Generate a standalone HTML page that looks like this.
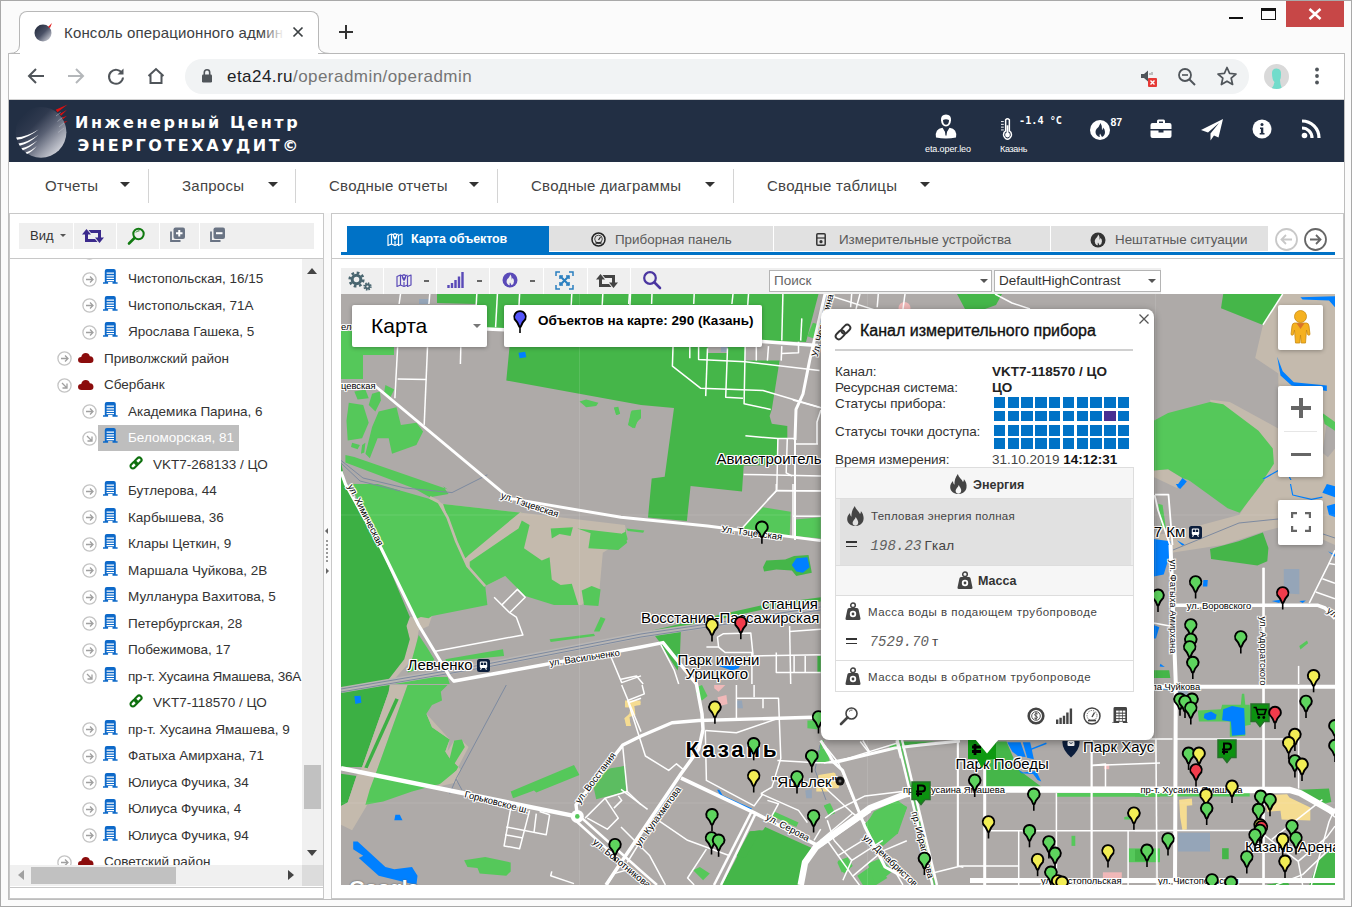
<!DOCTYPE html>
<html><head><meta charset="utf-8"><title>Консоль операционного администратора</title>
<style>
*{box-sizing:border-box;margin:0;padding:0}
html,body{width:1352px;height:907px;overflow:hidden;background:#fbfbfb;font-family:"Liberation Sans",sans-serif;}
div,span,svg{position:absolute}
span.i{position:static}
.t{white-space:nowrap;line-height:1}
#win{left:0;top:0;width:1352px;height:907px;border:1px solid #a9a9a9;background:#fbfbfb}
#tab{left:19px;top:11px;width:300px;height:43px;background:#fff;border:1px solid #b8b8b8;border-bottom:none;border-radius:8px 8px 0 0}
#toolbar{left:9px;top:53px;width:1335px;height:47px;background:#fff;border-top:1px solid #b8b8b8}
#omni{left:185px;top:59px;width:1064px;height:34.6px;border-radius:17.3px;background:#f1f3f4}
#hdr{left:9px;top:100px;width:1335px;height:62px;background:#222f44}
.brand{left:75px;color:#fff;font-weight:bold;font-size:16px;letter-spacing:2.55px;font-family:"DejaVu Sans","Liberation Sans",sans-serif}
#menu{left:9px;top:162px;width:1335px;height:51px;background:#fff}
.mi{top:178px;font-size:15px;color:#444;letter-spacing:0.25px}
.msep{top:169px;width:1px;height:34px;background:#d4d4d4}
.marr{top:182px;width:0;height:0;border-left:5px solid transparent;border-right:5px solid transparent;border-top:5px solid #333}
#lp{left:9px;top:213px;width:315px;height:686px;border:1px solid #c8c8c8;background:#fff}
#rp{left:331px;top:213px;width:1013px;height:686px;border:1px solid #c8c8c8;background:#fff}
.tr{font-size:13.5px;color:#333}
.hl{font-size:9px;color:#fff}
.tabg{top:226px;height:24.7px;background:#e1e1e1}
.tabt{top:232.5px;font-size:13.4px;color:#5a5a5a}
.pl{left:835px;font-size:13.5px;color:#333;letter-spacing:-0.1px}
.pv{left:992px;font-size:13.5px;color:#222;font-weight:bold}
.sq{width:11.5px;height:10.7px;background:#0072c6}
.mc{background:#fff;border-radius:2px;box-shadow:0 1px 4px rgba(0,0,0,.3)}
.ml{font-size:12px;color:#000;text-shadow:-1px 0 #fff,1px 0 #fff,0 -1px #fff,0 1px #fff}
</style></head><body>
<div id="win"></div>
<div id="tab"></div>
<svg style="left:9px;top:45px" width="12" height="9" viewBox="0 0 12 9"><path d="M0 8.5 Q10.5 8.5 10.5 0 L12 0 L12 9 L0 9Z" fill="#fff"/><path d="M0 8.5 Q10.5 8.5 10.5 0" fill="none" stroke="#b8b8b8"/></svg>
<svg style="left:318px;top:45px" width="12" height="9" viewBox="0 0 12 9"><path d="M12 8.5 Q0.5 8.5 0.5 0 L0 0 L0 9 L12 9Z" fill="#fff"/><path d="M12 8.5 Q0.5 8.5 0.5 0" fill="none" stroke="#b8b8b8"/></svg>
<div id="toolbar"></div>
<div style="left:8px;top:53px;width:1px;height:847px;background:#bdbdbd"></div><div style="left:1344px;top:53px;width:1px;height:847px;background:#bdbdbd"></div><div style="left:8px;top:899px;width:1337px;height:1px;background:#bdbdbd"></div>
<div style="left:20px;top:53px;width:298px;height:2px;background:#fff"></div>
<svg style="left:33px;top:22px" width="20" height="20" viewBox="0 0 20 20"><defs><linearGradient id="fg" x1="0" y1="0" x2="1" y2="1"><stop offset="0" stop-color="#1d2536"/><stop offset="0.5" stop-color="#4a5166"/><stop offset="1" stop-color="#e8e9ee"/></linearGradient></defs><circle cx="10" cy="11" r="8.5" fill="url(#fg)"/><path d="M15 5 L19 1 L17 6Z" fill="#e21b1b"/></svg>
<div class="t" style="left:64px;top:24.500px;font-size:15px;color:#3c4043;width:219px;overflow:hidden;letter-spacing:0.150px">Консоль операционного админ</div>
<div style="left:262px;top:20px;width:22px;height:24px;background:linear-gradient(90deg,rgba(255,255,255,0),#fff)"></div>
<svg style="left:291px;top:25px" width="14" height="14" viewBox="0 0 14 14"><path d="M2.5 2.5 L11.5 11.5 M11.5 2.5 L2.5 11.5" stroke="#3c4043" stroke-width="1.7"/></svg>
<svg style="left:338px;top:24px" width="16" height="16" viewBox="0 0 16 16"><path d="M8 1 V15 M1 8 H15" stroke="#333" stroke-width="2"/></svg>
<div style="left:1229px;top:17px;width:14px;height:2px;background:#111"></div>
<div style="left:1261px;top:8px;width:15px;height:12px;border:1px solid #111;border-top:3px solid #111"></div>
<div style="left:1286px;top:1px;width:58px;height:26px;background:#c74747"></div>
<svg style="left:1308px;top:8px" width="14" height="12" viewBox="0 0 14 12"><path d="M1.5 1 L12.5 11 M12.5 1 L1.5 11" stroke="#fff" stroke-width="2.6"/></svg>
<svg style="left:26px;top:66px" width="20" height="20" viewBox="0 0 20 20"><path d="M18 10 H3.5 M10 3 L3 10 L10 17" fill="none" stroke="#50555a" stroke-width="2"/></svg>
<svg style="left:66px;top:66px" width="20" height="20" viewBox="0 0 20 20"><path d="M2 10 H16.5 M10 3 L17 10 L10 17" fill="none" stroke="#b4b7ba" stroke-width="2"/></svg>
<svg style="left:106px;top:66px" width="20" height="20" viewBox="0 0 20 20"><path d="M16.2 7.5 A7 7 0 1 0 17 11.5" fill="none" stroke="#50555a" stroke-width="2"/><path d="M17.5 2.5 V8.5 H11.5Z" fill="#50555a"/></svg>
<svg style="left:146px;top:66px" width="20" height="20" viewBox="0 0 20 20"><path d="M2.5 10 L10 3 L17.5 10 M4.5 9 V17 H15.5 V9" fill="none" stroke="#50555a" stroke-width="2"/></svg>
<div id="omni"></div>
<div style="left:9px;top:99px;width:1335px;height:1px;background:#d2d2d2"></div>
<svg style="left:201px;top:68px" width="12" height="16" viewBox="0 0 12 16"><rect x="1" y="6.5" width="10" height="8" rx="1.2" fill="#50555a"/><path d="M3.3 7 V4.5 A2.7 2.7 0 0 1 8.7 4.5 V7" fill="none" stroke="#50555a" stroke-width="1.6"/></svg>
<div class="t" style="left:227px;top:68px;font-size:17px;color:#202124;letter-spacing:0.45px">eta24.ru<span class="i" style="color:#757575">/operadmin/operadmin</span></div>
<svg style="left:1139px;top:68px" width="22" height="20" viewBox="0 0 22 20"><path d="M2 6 H5 L9 2.5 V13.5 L5 10 H2Z" fill="#50555a"/><path d="M11 5 V7 M13 4 V7" stroke="#888" stroke-width="1"/><rect x="9" y="10" width="9" height="9" rx="1" fill="#e53935"/><path d="M11.5 12.5 L15.5 16.5 M15.5 12.5 L11.5 16.5" stroke="#fff" stroke-width="1.4"/></svg>
<svg style="left:1176px;top:66px" width="22" height="22" viewBox="0 0 22 22"><circle cx="9" cy="9" r="6" fill="none" stroke="#50555a" stroke-width="1.8"/><path d="M13.5 13.5 L19 19" stroke="#50555a" stroke-width="2"/><path d="M6 9 H12" stroke="#50555a" stroke-width="1.6"/></svg>
<svg style="left:1216px;top:65px" width="22" height="22" viewBox="0 0 22 22"><path d="M11 2.5 L13.6 8.4 L20 9 L15.2 13.2 L16.6 19.5 L11 16.2 L5.4 19.5 L6.8 13.2 L2 9 L8.4 8.4Z" fill="none" stroke="#50555a" stroke-width="1.7" stroke-linejoin="round"/></svg>
<svg style="left:1264px;top:64px" width="25" height="25" viewBox="0 0 25 25"><defs><clipPath id="av"><circle cx="12.5" cy="12.5" r="12.5"/></clipPath></defs><circle cx="12.5" cy="12.5" r="12.5" fill="#d9d9d9"/><g clip-path="url(#av)"><path d="M8 9 Q8 4.5 12.5 4.5 Q17.5 4.5 17 10.5 Q17 14 16 16 Q16 20 18 25 L7 25 Q10 22 10.5 18 Q8 16 8 9Z" fill="#72dccb"/></g></svg>
<svg style="left:1314px;top:66px" width="6" height="20" viewBox="0 0 6 20"><circle cx="3" cy="3.5" r="1.9" fill="#50555a"/><circle cx="3" cy="10" r="1.9" fill="#50555a"/><circle cx="3" cy="16.5" r="1.9" fill="#50555a"/></svg>
<div id="hdr"></div>
<svg style="left:13px;top:99px" width="62" height="62" viewBox="0 0 62 62"><defs><linearGradient id="lg" x1="0.150" y1="0.150" x2="0.850" y2="0.850"><stop offset="0" stop-color="#222f44"/><stop offset="0.300" stop-color="#2f394e"/><stop offset="0.550" stop-color="#5a6174"/><stop offset="0.800" stop-color="#9a9eab"/><stop offset="1" stop-color="#c9cbd3"/></linearGradient></defs><circle cx="28" cy="33.300" r="25.400" fill="url(#lg)"/><g fill="#fff"><path d="M3.100 38.600 Q14 37.500 25.600 30.400 Q15 39 4.200 40.800Z"/><path d="M5.500 44.600 Q15 43 25.600 35.700 Q16 44.500 6.800 46.700Z"/><path d="M8.400 49.300 Q16 47.800 24.400 41.600 Q17 49 9.800 51.200Z"/><path d="M12.600 53.400 Q18 52 23.800 46.900 Q19 52.800 14 55Z"/></g><g stroke="#b9bcc6" stroke-width="0.800" opacity="0.700"><path d="M43 17 L47.500 13.500 M44.500 22.500 L49.500 18.500 M46 28 L51 24 M45 33.500 L51 29"/></g><path d="M42.700 10.800 L54.600 5.500 L44.500 13.200Z M46.900 15 L54 10.800 L48 16.800Z M49.300 18.500 L54 16.800 L49.800 20.300Z M51 22.700 L54.600 22 L51.600 24Z" fill="#e00f0f"/></svg>
<div class="t brand" style="top:115px">Инженерный Центр</div>
<div class="t brand" style="top:138px;left:77.500px">ЭНЕРГОТЕХАУДИТ©</div>
<svg style="left:934px;top:112px" width="24" height="28" viewBox="0 0 24 28"><path d="M12 2.500 Q17.500 2.500 17 8.500 Q16.500 14 12 14.500 Q7.500 14 7 8.500 Q6.500 2.500 12 2.500Z" fill="#fff"/><path d="M9 8 Q12 6.500 15 8 Q15 12.500 12 12.800 Q9 12.500 9 8Z" fill="#222f44"/><path d="M2 25.500 Q0.500 17 8.500 15.800 L12 21.500 L15.500 15.800 Q23.500 17 22 25.500 Q12 27.500 2 25.500Z" fill="#fff"/><path d="M12 16 L13.200 17.800 L12.600 23 L12 24 L11.400 23 L10.800 17.800Z" fill="#222f44"/></svg>
<div class="t hl" style="left:925px;top:145px;letter-spacing:-0.1px">eta.oper.leo</div>
<svg style="left:1001px;top:117px" width="13" height="24" viewBox="0 0 14 24"><path d="M5 2 Q7 0 9 2 V14 Q12 16 11 19.5 Q9.5 23 7 23 Q4.5 23 3 19.5 Q2 16 5 14Z" fill="none" stroke="#fff" stroke-width="1.6"/><circle cx="7" cy="18.5" r="2.6" fill="#fff"/><path d="M7 8 V18" stroke="#fff" stroke-width="2"/><path d="M0 4 H3 M0 7 H3 M0 10 H3 M0 13 H3" stroke="#fff" stroke-width="1"/></svg>
<div class="t" style="left:1019px;top:116px;font-size:10.200px;font-weight:bold;color:#fff;font-family:'DejaVu Sans Mono','Liberation Mono',monospace">-1.4 °C</div>
<div class="t hl" style="left:1000px;top:145px;letter-spacing:-0.3px">Казань</div>
<svg style="left:1089px;top:119px" width="22" height="22" viewBox="0 0 22 22"><circle cx="11" cy="11" r="10" fill="#fff"/><path d="M11.5 4 Q10 8 7.5 10 Q5.5 13 7.5 16 Q9 18 11 18 Q10 16.5 11 14.5 Q12 16 13 18 Q16 16.5 16 13 Q16 10 14 8.5 Q14 10.5 13 11 Q13.5 7 11.5 4Z" fill="#222f44"/></svg>
<div class="t" style="left:1110.500px;top:116.500px;font-size:10.500px;font-weight:bold;color:#fff">87</div>
<svg style="left:1150px;top:119px" width="22" height="20" viewBox="0 0 22 20"><path d="M7 4 V2 Q7 0.5 8.5 0.5 H13.5 Q15 0.5 15 2 V4 H19.5 Q21.5 4 21.5 6 V10 H0.5 V6 Q0.5 4 2.5 4Z M9 4 H13 V2.5 H9Z" fill="#fff" fill-rule="evenodd"/><path d="M0.5 11.5 H8.5 V13.5 H13.5 V11.5 H21.5 V17 Q21.5 19 19.5 19 H2.5 Q0.5 19 0.5 17Z" fill="#fff"/></svg>
<svg style="left:1200px;top:118px" width="24" height="24" viewBox="0 0 24 24"><path d="M23 1 L1 12 L8 14.5 L19 5 L10.5 15.5 L10.5 22.5 L14 17.5 L18.5 19.5Z" fill="#fff"/></svg>
<svg style="left:1252px;top:119px" width="20" height="20" viewBox="0 0 20 20"><circle cx="10" cy="10" r="9.5" fill="#fff"/><circle cx="10" cy="5.6" r="1.5" fill="#222f44"/><path d="M8 8.5 H11.3 V14 H12.5 V15.5 H7.7 V14 H8.9 V10 H8Z" fill="#222f44"/></svg>
<svg style="left:1301px;top:119px" width="22" height="20" viewBox="0 0 22 20"><circle cx="3.5" cy="16.5" r="2.8" fill="#fff"/><path d="M1 9 A10 10 0 0 1 11 19" fill="none" stroke="#fff" stroke-width="3.2"/><path d="M1 2 A17 17 0 0 1 18 19" fill="none" stroke="#fff" stroke-width="3.2"/></svg>
<div id="menu"></div>
<div class="t mi" style="left:45px">Отчеты</div>
<div class="marr" style="left:120px"></div>
<div class="t mi" style="left:182px">Запросы</div>
<div class="marr" style="left:268px"></div>
<div class="t mi" style="left:329px">Сводные отчеты</div>
<div class="marr" style="left:469px"></div>
<div class="t mi" style="left:531px">Сводные диаграммы</div>
<div class="marr" style="left:705px"></div>
<div class="t mi" style="left:767px">Сводные таблицы</div>
<div class="marr" style="left:920px"></div>
<div class="msep" style="left:148px"></div>
<div class="msep" style="left:295px"></div>
<div class="msep" style="left:497px"></div>
<div class="msep" style="left:733px"></div>
<div id="lp"></div>
<div id="rp"></div>
<div style="left:19px;top:223px;width:295px;height:26px;background:#efefef"></div>
<div style="left:73px;top:223px;width:1px;height:26px;background:#fff"></div>
<div style="left:116px;top:223px;width:1px;height:26px;background:#fff"></div>
<div style="left:159px;top:223px;width:1px;height:26px;background:#fff"></div>
<div style="left:199px;top:223px;width:1px;height:26px;background:#fff"></div>
<div class="t" style="left:30px;top:229px;font-size:13px;color:#333">Вид</div>
<div style="left:60px;top:234px;width:0;height:0;border-left:3px solid transparent;border-right:3px solid transparent;border-top:3px solid #555"></div>
<svg style="left:82px;top:228px" width="22" height="16" viewBox="0 0 22 16"><path d="M0 6.5 L4.5 1 L9 6.5 H6 V11 H13 L15.5 14 H3 V6.5Z M22 9.5 L17.5 15 L13 9.5 H16 V5 H9 L6.5 2 H19 V9.5Z" fill="#3b2a8c"/></svg>
<svg style="left:127px;top:226px" width="20" height="20" viewBox="0 0 20 20"><circle cx="11.5" cy="8" r="5.2" fill="none" stroke="#117a11" stroke-width="2"/><path d="M7.5 12 L2 17.5" stroke="#117a11" stroke-width="2.6" stroke-linecap="round"/><path d="M9 6.5 Q10 4.5 12.5 4.8" stroke="#117a11" stroke-width="1" fill="none"/></svg>
<svg style="left:170px;top:227px" width="16" height="16" viewBox="0 0 16 16"><path d="M1 4.5 V14 H10.5" fill="none" stroke="#6a7484" stroke-width="1.8"/><rect x="3.5" y="0.5" width="11.5" height="11.5" rx="2" fill="#6a7484"/><path d="M6 6.2 H12.5 M9.25 3 V9.5" stroke="#fff" stroke-width="2"/></svg>
<svg style="left:210px;top:227px" width="16" height="16" viewBox="0 0 16 16"><path d="M1 4.5 V14 H10.5" fill="none" stroke="#6a7484" stroke-width="1.8"/><rect x="3.5" y="0.5" width="11.5" height="11.5" rx="2" fill="#6a7484"/><path d="M6 6.2 H12.5" stroke="#fff" stroke-width="2"/></svg>
<div style="left:10px;top:258px;width:313px;height:1px;background:#c8c8c8"></div>
<div style="left:10px;top:259px;width:292px;height:606px;overflow:hidden">
<svg style="left:71.5px;top:-14.0px" width="15" height="15" viewBox="0 0 15 15"><circle cx="7.5" cy="7.5" r="6.6" fill="#fff" stroke="#c4c4c4" stroke-width="1.3"/><path d="M4 7.5 H11 M8 4.5 L11 7.5 L8 10.5" fill="none" stroke="#a0a0a0" stroke-width="1.3"/></svg>
<svg style="left:71.5px;top:12.5px" width="15" height="15" viewBox="0 0 15 15"><circle cx="7.5" cy="7.5" r="6.6" fill="#fff" stroke="#c4c4c4" stroke-width="1.3"/><path d="M4 7.5 H11 M8 4.5 L11 7.5 L8 10.5" fill="none" stroke="#a0a0a0" stroke-width="1.3"/></svg>
<svg style="left:93.2px;top:10.4px" width="14.600" height="14.800" viewBox="0 0 14.600 14.800"><path d="M1.800 2 Q1.800 0 3.800 0 H10.800 Q12.800 0 12.800 2 V13.300 H14.600 V14.800 H9.500 V13 H5.100 V14.800 H0 V13.300 H1.800Z" fill="#0d69c9"/><path d="M3.600 4.200 H11 M3.600 6.800 H11 M3.600 9.400 H11 M3.600 11.700 H11" stroke="#fff" stroke-width="1.200"/></svg>
<div class="t tr" style="left:118px;top:13.0px;color:#333">Чистопольская, 16/15</div>
<svg style="left:71.5px;top:39.0px" width="15" height="15" viewBox="0 0 15 15"><circle cx="7.5" cy="7.5" r="6.6" fill="#fff" stroke="#c4c4c4" stroke-width="1.3"/><path d="M4 7.5 H11 M8 4.5 L11 7.5 L8 10.5" fill="none" stroke="#a0a0a0" stroke-width="1.3"/></svg>
<svg style="left:93.2px;top:36.9px" width="14.600" height="14.800" viewBox="0 0 14.600 14.800"><path d="M1.800 2 Q1.800 0 3.800 0 H10.800 Q12.800 0 12.800 2 V13.300 H14.600 V14.800 H9.500 V13 H5.100 V14.800 H0 V13.300 H1.800Z" fill="#0d69c9"/><path d="M3.600 4.200 H11 M3.600 6.800 H11 M3.600 9.400 H11 M3.600 11.700 H11" stroke="#fff" stroke-width="1.200"/></svg>
<div class="t tr" style="left:118px;top:39.5px;color:#333">Чистопольская, 71А</div>
<svg style="left:71.5px;top:65.5px" width="15" height="15" viewBox="0 0 15 15"><circle cx="7.5" cy="7.5" r="6.6" fill="#fff" stroke="#c4c4c4" stroke-width="1.3"/><path d="M4 7.5 H11 M8 4.5 L11 7.5 L8 10.5" fill="none" stroke="#a0a0a0" stroke-width="1.3"/></svg>
<svg style="left:93.2px;top:63.4px" width="14.600" height="14.800" viewBox="0 0 14.600 14.800"><path d="M1.800 2 Q1.800 0 3.800 0 H10.800 Q12.800 0 12.800 2 V13.300 H14.600 V14.800 H9.500 V13 H5.100 V14.800 H0 V13.300 H1.800Z" fill="#0d69c9"/><path d="M3.600 4.200 H11 M3.600 6.800 H11 M3.600 9.400 H11 M3.600 11.700 H11" stroke="#fff" stroke-width="1.200"/></svg>
<div class="t tr" style="left:118px;top:66.0px;color:#333">Ярослава Гашека, 5</div>
<svg style="left:46.5px;top:92.0px" width="15" height="15" viewBox="0 0 15 15"><circle cx="7.5" cy="7.5" r="6.6" fill="#fff" stroke="#c4c4c4" stroke-width="1.3"/><path d="M4 7.5 H11 M8 4.5 L11 7.5 L8 10.5" fill="none" stroke="#a0a0a0" stroke-width="1.3"/></svg>
<svg style="left:68.0px;top:94.0px" width="15.500" height="10" viewBox="0 0 17 11"><path d="M4 11 Q0 11 0 7.500 Q0 4.500 3.500 4.300 Q4.500 0 8.500 0 Q12 0 13 3.500 Q17 3.800 17 7.500 Q17 11 13.500 11Z" fill="#8b0c0c"/></svg>
<div class="t tr" style="left:94px;top:92.5px;color:#333">Приволжский район</div>
<svg style="left:46.5px;top:118.5px" width="15" height="15" viewBox="0 0 15 15"><circle cx="7.5" cy="7.5" r="6.6" fill="#fff" stroke="#c4c4c4" stroke-width="1.3"/><path d="M5 5 L10 10 M10 5.5 V10 H5.5" fill="none" stroke="#a0a0a0" stroke-width="1.3"/></svg>
<svg style="left:68.0px;top:120.5px" width="15.500" height="10" viewBox="0 0 17 11"><path d="M4 11 Q0 11 0 7.500 Q0 4.500 3.500 4.300 Q4.500 0 8.500 0 Q12 0 13 3.500 Q17 3.800 17 7.500 Q17 11 13.500 11Z" fill="#8b0c0c"/></svg>
<div class="t tr" style="left:94px;top:119.0px;color:#333">Сбербанк</div>
<svg style="left:71.5px;top:145.0px" width="15" height="15" viewBox="0 0 15 15"><circle cx="7.5" cy="7.5" r="6.6" fill="#fff" stroke="#c4c4c4" stroke-width="1.3"/><path d="M4 7.5 H11 M8 4.5 L11 7.5 L8 10.5" fill="none" stroke="#a0a0a0" stroke-width="1.3"/></svg>
<svg style="left:93.2px;top:142.9px" width="14.600" height="14.800" viewBox="0 0 14.600 14.800"><path d="M1.800 2 Q1.800 0 3.800 0 H10.800 Q12.800 0 12.800 2 V13.300 H14.600 V14.800 H9.500 V13 H5.100 V14.800 H0 V13.300 H1.800Z" fill="#0d69c9"/><path d="M3.600 4.200 H11 M3.600 6.800 H11 M3.600 9.400 H11 M3.600 11.700 H11" stroke="#fff" stroke-width="1.200"/></svg>
<div class="t tr" style="left:118px;top:145.5px;color:#333">Академика Парина, 6</div>
<svg style="left:71.5px;top:171.5px" width="15" height="15" viewBox="0 0 15 15"><circle cx="7.5" cy="7.5" r="6.6" fill="#fff" stroke="#c4c4c4" stroke-width="1.3"/><path d="M5 5 L10 10 M10 5.5 V10 H5.5" fill="none" stroke="#a0a0a0" stroke-width="1.3"/></svg>
<div style="left:88px;top:166.0px;width:141px;height:26px;background:#bebebe"></div>
<svg style="left:93.2px;top:169.4px" width="14.600" height="14.800" viewBox="0 0 14.600 14.800"><path d="M1.800 2 Q1.800 0 3.800 0 H10.800 Q12.800 0 12.800 2 V13.300 H14.600 V14.800 H9.500 V13 H5.100 V14.800 H0 V13.300 H1.800Z" fill="#0d69c9"/><path d="M3.600 4.200 H11 M3.600 6.800 H11 M3.600 9.400 H11 M3.600 11.700 H11" stroke="#fff" stroke-width="1.200"/></svg>
<div class="t tr" style="left:118px;top:172.0px;color:#fff">Беломорская, 81</div>
<svg style="left:118.7px;top:196.5px" width="14" height="14" viewBox="0 0 14 14"><g transform="rotate(-45 7 7)" fill="none" stroke="#0e700e" stroke-width="2.100"><rect x="0.200" y="4.600" width="7.600" height="4.800" rx="2.400"/><rect x="6.200" y="4.600" width="7.600" height="4.800" rx="2.400"/></g></svg>
<div class="t tr" style="left:143px;top:198.5px;color:#333">VKT7-268133 / ЦО</div>
<svg style="left:71.5px;top:224.5px" width="15" height="15" viewBox="0 0 15 15"><circle cx="7.5" cy="7.5" r="6.6" fill="#fff" stroke="#c4c4c4" stroke-width="1.3"/><path d="M4 7.5 H11 M8 4.5 L11 7.5 L8 10.5" fill="none" stroke="#a0a0a0" stroke-width="1.3"/></svg>
<svg style="left:93.2px;top:222.4px" width="14.600" height="14.800" viewBox="0 0 14.600 14.800"><path d="M1.800 2 Q1.800 0 3.800 0 H10.800 Q12.800 0 12.800 2 V13.300 H14.600 V14.800 H9.500 V13 H5.100 V14.800 H0 V13.300 H1.800Z" fill="#0d69c9"/><path d="M3.600 4.200 H11 M3.600 6.800 H11 M3.600 9.400 H11 M3.600 11.700 H11" stroke="#fff" stroke-width="1.200"/></svg>
<div class="t tr" style="left:118px;top:225.0px;color:#333">Бутлерова, 44</div>
<svg style="left:71.5px;top:251.0px" width="15" height="15" viewBox="0 0 15 15"><circle cx="7.5" cy="7.5" r="6.6" fill="#fff" stroke="#c4c4c4" stroke-width="1.3"/><path d="M4 7.5 H11 M8 4.5 L11 7.5 L8 10.5" fill="none" stroke="#a0a0a0" stroke-width="1.3"/></svg>
<svg style="left:93.2px;top:248.9px" width="14.600" height="14.800" viewBox="0 0 14.600 14.800"><path d="M1.800 2 Q1.800 0 3.800 0 H10.800 Q12.800 0 12.800 2 V13.300 H14.600 V14.800 H9.500 V13 H5.100 V14.800 H0 V13.300 H1.800Z" fill="#0d69c9"/><path d="M3.600 4.200 H11 M3.600 6.800 H11 M3.600 9.400 H11 M3.600 11.700 H11" stroke="#fff" stroke-width="1.200"/></svg>
<div class="t tr" style="left:118px;top:251.5px;color:#333">Карбышева, 36</div>
<svg style="left:71.5px;top:277.5px" width="15" height="15" viewBox="0 0 15 15"><circle cx="7.5" cy="7.5" r="6.6" fill="#fff" stroke="#c4c4c4" stroke-width="1.3"/><path d="M4 7.5 H11 M8 4.5 L11 7.5 L8 10.5" fill="none" stroke="#a0a0a0" stroke-width="1.3"/></svg>
<svg style="left:93.2px;top:275.4px" width="14.600" height="14.800" viewBox="0 0 14.600 14.800"><path d="M1.800 2 Q1.800 0 3.800 0 H10.800 Q12.800 0 12.800 2 V13.300 H14.600 V14.800 H9.500 V13 H5.100 V14.800 H0 V13.300 H1.800Z" fill="#0d69c9"/><path d="M3.600 4.200 H11 M3.600 6.800 H11 M3.600 9.400 H11 M3.600 11.700 H11" stroke="#fff" stroke-width="1.200"/></svg>
<div class="t tr" style="left:118px;top:278.0px;color:#333">Клары Цеткин, 9</div>
<svg style="left:71.5px;top:304.0px" width="15" height="15" viewBox="0 0 15 15"><circle cx="7.5" cy="7.5" r="6.6" fill="#fff" stroke="#c4c4c4" stroke-width="1.3"/><path d="M4 7.5 H11 M8 4.5 L11 7.5 L8 10.5" fill="none" stroke="#a0a0a0" stroke-width="1.3"/></svg>
<svg style="left:93.2px;top:301.9px" width="14.600" height="14.800" viewBox="0 0 14.600 14.800"><path d="M1.800 2 Q1.800 0 3.800 0 H10.800 Q12.800 0 12.800 2 V13.300 H14.600 V14.800 H9.500 V13 H5.100 V14.800 H0 V13.300 H1.800Z" fill="#0d69c9"/><path d="M3.600 4.200 H11 M3.600 6.800 H11 M3.600 9.400 H11 M3.600 11.700 H11" stroke="#fff" stroke-width="1.200"/></svg>
<div class="t tr" style="left:118px;top:304.5px;color:#333">Маршала Чуйкова, 2В</div>
<svg style="left:71.5px;top:330.5px" width="15" height="15" viewBox="0 0 15 15"><circle cx="7.5" cy="7.5" r="6.6" fill="#fff" stroke="#c4c4c4" stroke-width="1.3"/><path d="M4 7.5 H11 M8 4.5 L11 7.5 L8 10.5" fill="none" stroke="#a0a0a0" stroke-width="1.3"/></svg>
<svg style="left:93.2px;top:328.4px" width="14.600" height="14.800" viewBox="0 0 14.600 14.800"><path d="M1.800 2 Q1.800 0 3.800 0 H10.800 Q12.800 0 12.800 2 V13.300 H14.600 V14.800 H9.500 V13 H5.100 V14.800 H0 V13.300 H1.800Z" fill="#0d69c9"/><path d="M3.600 4.200 H11 M3.600 6.800 H11 M3.600 9.400 H11 M3.600 11.700 H11" stroke="#fff" stroke-width="1.200"/></svg>
<div class="t tr" style="left:118px;top:331.0px;color:#333">Мулланура Вахитова, 5</div>
<svg style="left:71.5px;top:357.0px" width="15" height="15" viewBox="0 0 15 15"><circle cx="7.5" cy="7.5" r="6.6" fill="#fff" stroke="#c4c4c4" stroke-width="1.3"/><path d="M4 7.5 H11 M8 4.5 L11 7.5 L8 10.5" fill="none" stroke="#a0a0a0" stroke-width="1.3"/></svg>
<svg style="left:93.2px;top:354.9px" width="14.600" height="14.800" viewBox="0 0 14.600 14.800"><path d="M1.800 2 Q1.800 0 3.800 0 H10.800 Q12.800 0 12.800 2 V13.300 H14.600 V14.800 H9.500 V13 H5.100 V14.800 H0 V13.300 H1.800Z" fill="#0d69c9"/><path d="M3.600 4.200 H11 M3.600 6.800 H11 M3.600 9.400 H11 M3.600 11.700 H11" stroke="#fff" stroke-width="1.200"/></svg>
<div class="t tr" style="left:118px;top:357.5px;color:#333">Петербургская, 28</div>
<svg style="left:71.5px;top:383.5px" width="15" height="15" viewBox="0 0 15 15"><circle cx="7.5" cy="7.5" r="6.6" fill="#fff" stroke="#c4c4c4" stroke-width="1.3"/><path d="M4 7.5 H11 M8 4.5 L11 7.5 L8 10.5" fill="none" stroke="#a0a0a0" stroke-width="1.3"/></svg>
<svg style="left:93.2px;top:381.4px" width="14.600" height="14.800" viewBox="0 0 14.600 14.800"><path d="M1.800 2 Q1.800 0 3.800 0 H10.800 Q12.800 0 12.800 2 V13.300 H14.600 V14.800 H9.500 V13 H5.100 V14.800 H0 V13.300 H1.800Z" fill="#0d69c9"/><path d="M3.600 4.200 H11 M3.600 6.800 H11 M3.600 9.400 H11 M3.600 11.700 H11" stroke="#fff" stroke-width="1.200"/></svg>
<div class="t tr" style="left:118px;top:384.0px;color:#333">Побежимова, 17</div>
<svg style="left:71.5px;top:410.0px" width="15" height="15" viewBox="0 0 15 15"><circle cx="7.5" cy="7.5" r="6.6" fill="#fff" stroke="#c4c4c4" stroke-width="1.3"/><path d="M5 5 L10 10 M10 5.5 V10 H5.5" fill="none" stroke="#a0a0a0" stroke-width="1.3"/></svg>
<svg style="left:93.2px;top:407.9px" width="14.600" height="14.800" viewBox="0 0 14.600 14.800"><path d="M1.800 2 Q1.800 0 3.800 0 H10.800 Q12.800 0 12.800 2 V13.300 H14.600 V14.800 H9.500 V13 H5.100 V14.800 H0 V13.300 H1.800Z" fill="#0d69c9"/><path d="M3.600 4.200 H11 M3.600 6.800 H11 M3.600 9.400 H11 M3.600 11.700 H11" stroke="#fff" stroke-width="1.200"/></svg>
<div class="t tr" style="left:118px;top:410.5px;color:#333;letter-spacing:-0.2px">пр-т. Хусаина Ямашева, 36А</div>
<svg style="left:118.7px;top:435.0px" width="14" height="14" viewBox="0 0 14 14"><g transform="rotate(-45 7 7)" fill="none" stroke="#0e700e" stroke-width="2.100"><rect x="0.200" y="4.600" width="7.600" height="4.800" rx="2.400"/><rect x="6.200" y="4.600" width="7.600" height="4.800" rx="2.400"/></g></svg>
<div class="t tr" style="left:143px;top:437.0px;color:#333">VKT7-118570 / ЦО</div>
<svg style="left:71.5px;top:463.0px" width="15" height="15" viewBox="0 0 15 15"><circle cx="7.5" cy="7.5" r="6.6" fill="#fff" stroke="#c4c4c4" stroke-width="1.3"/><path d="M4 7.5 H11 M8 4.5 L11 7.5 L8 10.5" fill="none" stroke="#a0a0a0" stroke-width="1.3"/></svg>
<svg style="left:93.2px;top:460.9px" width="14.600" height="14.800" viewBox="0 0 14.600 14.800"><path d="M1.800 2 Q1.800 0 3.800 0 H10.800 Q12.800 0 12.800 2 V13.300 H14.600 V14.800 H9.500 V13 H5.100 V14.800 H0 V13.300 H1.800Z" fill="#0d69c9"/><path d="M3.600 4.200 H11 M3.600 6.800 H11 M3.600 9.400 H11 M3.600 11.700 H11" stroke="#fff" stroke-width="1.200"/></svg>
<div class="t tr" style="left:118px;top:463.5px;color:#333">пр-т. Хусаина Ямашева, 9</div>
<svg style="left:71.5px;top:489.5px" width="15" height="15" viewBox="0 0 15 15"><circle cx="7.5" cy="7.5" r="6.6" fill="#fff" stroke="#c4c4c4" stroke-width="1.3"/><path d="M4 7.5 H11 M8 4.5 L11 7.5 L8 10.5" fill="none" stroke="#a0a0a0" stroke-width="1.3"/></svg>
<svg style="left:93.2px;top:487.4px" width="14.600" height="14.800" viewBox="0 0 14.600 14.800"><path d="M1.800 2 Q1.800 0 3.800 0 H10.800 Q12.800 0 12.800 2 V13.300 H14.600 V14.800 H9.500 V13 H5.100 V14.800 H0 V13.300 H1.800Z" fill="#0d69c9"/><path d="M3.600 4.200 H11 M3.600 6.800 H11 M3.600 9.400 H11 M3.600 11.700 H11" stroke="#fff" stroke-width="1.200"/></svg>
<div class="t tr" style="left:118px;top:490.0px;color:#333">Фатыха Амирхана, 71</div>
<svg style="left:71.5px;top:516.0px" width="15" height="15" viewBox="0 0 15 15"><circle cx="7.5" cy="7.5" r="6.6" fill="#fff" stroke="#c4c4c4" stroke-width="1.3"/><path d="M4 7.5 H11 M8 4.5 L11 7.5 L8 10.5" fill="none" stroke="#a0a0a0" stroke-width="1.3"/></svg>
<svg style="left:93.2px;top:513.9px" width="14.600" height="14.800" viewBox="0 0 14.600 14.800"><path d="M1.800 2 Q1.800 0 3.800 0 H10.800 Q12.800 0 12.800 2 V13.300 H14.600 V14.800 H9.500 V13 H5.100 V14.800 H0 V13.300 H1.800Z" fill="#0d69c9"/><path d="M3.600 4.200 H11 M3.600 6.800 H11 M3.600 9.400 H11 M3.600 11.700 H11" stroke="#fff" stroke-width="1.200"/></svg>
<div class="t tr" style="left:118px;top:516.5px;color:#333">Юлиуса Фучика, 34</div>
<svg style="left:71.5px;top:542.5px" width="15" height="15" viewBox="0 0 15 15"><circle cx="7.5" cy="7.5" r="6.6" fill="#fff" stroke="#c4c4c4" stroke-width="1.3"/><path d="M4 7.5 H11 M8 4.5 L11 7.5 L8 10.5" fill="none" stroke="#a0a0a0" stroke-width="1.3"/></svg>
<svg style="left:93.2px;top:540.4px" width="14.600" height="14.800" viewBox="0 0 14.600 14.800"><path d="M1.800 2 Q1.800 0 3.800 0 H10.800 Q12.800 0 12.800 2 V13.300 H14.600 V14.800 H9.500 V13 H5.100 V14.800 H0 V13.300 H1.800Z" fill="#0d69c9"/><path d="M3.600 4.200 H11 M3.600 6.800 H11 M3.600 9.400 H11 M3.600 11.700 H11" stroke="#fff" stroke-width="1.200"/></svg>
<div class="t tr" style="left:118px;top:543.0px;color:#333">Юлиуса Фучика, 4</div>
<svg style="left:71.5px;top:569.0px" width="15" height="15" viewBox="0 0 15 15"><circle cx="7.5" cy="7.5" r="6.6" fill="#fff" stroke="#c4c4c4" stroke-width="1.3"/><path d="M4 7.5 H11 M8 4.5 L11 7.5 L8 10.5" fill="none" stroke="#a0a0a0" stroke-width="1.3"/></svg>
<svg style="left:93.2px;top:566.9px" width="14.600" height="14.800" viewBox="0 0 14.600 14.800"><path d="M1.800 2 Q1.800 0 3.800 0 H10.800 Q12.800 0 12.800 2 V13.300 H14.600 V14.800 H9.500 V13 H5.100 V14.800 H0 V13.300 H1.800Z" fill="#0d69c9"/><path d="M3.600 4.200 H11 M3.600 6.800 H11 M3.600 9.400 H11 M3.600 11.700 H11" stroke="#fff" stroke-width="1.200"/></svg>
<div class="t tr" style="left:118px;top:569.5px;color:#333">Юлиуса Фучика, 94</div>
<svg style="left:46.5px;top:595.5px" width="15" height="15" viewBox="0 0 15 15"><circle cx="7.5" cy="7.5" r="6.6" fill="#fff" stroke="#c4c4c4" stroke-width="1.3"/><path d="M4 7.5 H11 M8 4.5 L11 7.5 L8 10.5" fill="none" stroke="#a0a0a0" stroke-width="1.3"/></svg>
<svg style="left:68.0px;top:597.5px" width="15.500" height="10" viewBox="0 0 17 11"><path d="M4 11 Q0 11 0 7.500 Q0 4.500 3.500 4.300 Q4.500 0 8.500 0 Q12 0 13 3.500 Q17 3.800 17 7.500 Q17 11 13.500 11Z" fill="#8b0c0c"/></svg>
<div class="t tr" style="left:94px;top:596.0px;color:#333">Советский район</div>
</div>
<div style="left:302px;top:259px;width:21px;height:606px;background:#f0f0f0"></div>
<div style="left:304px;top:765px;width:17px;height:44px;background:#c1c1c1"></div>
<div style="left:307px;top:268px;width:0;height:0;border-left:5.5px solid transparent;border-right:5.5px solid transparent;border-bottom:6px solid #444"></div>
<div style="left:307px;top:850px;width:0;height:0;border-left:5.5px solid transparent;border-right:5.5px solid transparent;border-top:6px solid #444"></div>
<div style="left:10px;top:865px;width:292px;height:21px;background:#f0f0f0"></div>
<div style="left:302px;top:865px;width:21px;height:21px;background:#dcdcdc"></div>
<div style="left:31px;top:867px;width:145px;height:17px;background:#c1c1c1"></div>
<div style="left:18px;top:870px;width:0;height:0;border-top:5.5px solid transparent;border-bottom:5.5px solid transparent;border-right:6px solid #a0a0a0"></div>
<div style="left:288px;top:870px;width:0;height:0;border-top:5.5px solid transparent;border-bottom:5.5px solid transparent;border-left:6px solid #444"></div>
<div style="left:10px;top:887px;width:313px;height:1px;background:#c8c8c8"></div>
<div style="left:325px;top:528px;width:0;height:0;border-top:3px solid transparent;border-bottom:3px solid transparent;border-right:3px solid #666"></div>
<div style="left:326px;top:568px;width:0;height:0;border-top:3px solid transparent;border-bottom:3px solid transparent;border-left:3px solid #666"></div>
<div style="left:326px;top:540px;width:2px;height:2px;background:#999"></div>
<div style="left:326px;top:544px;width:2px;height:2px;background:#999"></div>
<div style="left:326px;top:548px;width:2px;height:2px;background:#999"></div>
<div style="left:326px;top:552px;width:2px;height:2px;background:#999"></div>
<div style="left:326px;top:556px;width:2px;height:2px;background:#999"></div>
<div style="left:326px;top:560px;width:2px;height:2px;background:#999"></div>
<div style="left:347px;top:226px;width:202px;height:26px;background:#0072c6"></div>
<div class="tabg" style="left:549px;width:224px"></div>
<div class="tabg" style="left:774px;width:276px"></div>
<div class="tabg" style="left:1051px;width:217px"></div>
<div style="left:341px;top:251.700px;width:994px;height:3px;background:#0072c6"></div>
<div style="left:332px;top:258px;width:1011px;height:1px;background:#c8c8c8"></div>
<svg style="left:387px;top:232px" width="16" height="15" viewBox="0 0 16 15"><path d="M1 3.500 L4.500 2 V12 L1 13.500Z M11.500 3.500 L15 2 V12 L11.500 13.500Z M4.500 2 L6 2.700 M4.500 12 L8 13.500 L11.500 12 M10 2.700 L11.500 2" fill="none" stroke="#fff" stroke-width="1.200" stroke-linejoin="round"/><path d="M8 1 Q10.300 1 10.300 3.500 Q10.300 5 8 8.500 Q5.700 5 5.700 3.500 Q5.700 1 8 1Z M8 2.600 A1 1 0 0 0 8 4.600 A1 1 0 0 0 8 2.600Z" fill="#fff" fill-rule="evenodd"/><path d="M8 9 V13" stroke="#fff" stroke-width="1.200"/></svg>
<div class="t" style="left:411px;top:233px;font-size:12.500px;color:#fff;letter-spacing:-0.1px;font-weight:bold">Карта объектов</div>
<svg style="left:591px;top:232px" width="15" height="15" viewBox="0 0 15 15"><circle cx="7.500" cy="7.500" r="6.500" fill="none" stroke="#222" stroke-width="1.500"/><circle cx="7.500" cy="7" r="3.800" fill="none" stroke="#222" stroke-width="0.800"/><path d="M7.500 8 L9.500 5" stroke="#222" stroke-width="1.200"/><path d="M4.500 11 H10.500" stroke="#222" stroke-width="1.600"/></svg>
<div class="t tabt" style="left:615px">Приборная панель</div>
<svg style="left:816px;top:233px" width="10" height="13" viewBox="0 0 10 13"><rect x="0.800" y="0.800" width="8.400" height="11.400" rx="1" fill="none" stroke="#333" stroke-width="1.500"/><path d="M1 5 H9" stroke="#333" stroke-width="1.200"/><circle cx="5" cy="8.700" r="1.600" fill="#333"/></svg>
<div class="t tabt" style="left:839px">Измерительные устройства</div>
<svg style="left:1090px;top:232px" width="16" height="16" viewBox="0 0 16 16"><circle cx="8" cy="8" r="7.500" fill="#333"/><path d="M8.400 2.500 Q7.300 5.500 5.400 7 Q3.800 9.300 5.300 11.700 Q6.500 13.300 8 13.300 Q7.200 12 8 10.500 Q8.800 11.700 9.500 13.300 Q12 12 12 9.300 Q12 7 10.400 5.800 Q10.400 7.300 9.600 7.800 Q10 4.800 8.400 2.500Z" fill="#e1e1e1"/></svg>
<div class="t tabt" style="left:1115px">Нештатные ситуации</div>
<svg style="left:1275px;top:228px" width="23" height="23" viewBox="0 0 23 23"><circle cx="11.500" cy="11.500" r="10.500" fill="#fff" stroke="#c8c8c8" stroke-width="1.800"/><path d="M17 11.500 H6.500 M11 7 L6.500 11.500 L11 16" fill="none" stroke="#c8c8c8" stroke-width="1.800"/></svg>
<svg style="left:1304px;top:228px" width="23" height="23" viewBox="0 0 23 23"><circle cx="11.500" cy="11.500" r="10.500" fill="#fff" stroke="#666" stroke-width="1.800"/><path d="M6 11.500 H16.500 M12 7 L16.500 11.500 L12 16" fill="none" stroke="#666" stroke-width="1.800"/></svg>
<div style="left:341px;top:268px;width:820px;height:26px;background:#efefef"></div>
<div style="left:383px;top:268px;width:1px;height:26px;background:#fff"></div>
<div style="left:436px;top:268px;width:1px;height:26px;background:#fff"></div>
<div style="left:489px;top:268px;width:1px;height:26px;background:#fff"></div>
<div style="left:543px;top:268px;width:1px;height:26px;background:#fff"></div>
<div style="left:587px;top:268px;width:1px;height:26px;background:#fff"></div>
<div style="left:630px;top:268px;width:1px;height:26px;background:#fff"></div>
<svg style="left:348px;top:271px" width="24" height="20" viewBox="0 0 24 20"><g fill="none" stroke="#4a6670"><circle cx="8.500" cy="8.500" r="4.300" stroke-width="3"/><circle cx="8.500" cy="8.500" r="6.800" stroke-width="2.600" stroke-dasharray="2.700 2.640"/><circle cx="19.500" cy="15.500" r="2" stroke-width="1.800"/><circle cx="19.500" cy="15.500" r="3.400" stroke-width="1.600" stroke-dasharray="1.500 1.170"/></g></svg>
<svg style="left:396px;top:273px" width="16" height="15" viewBox="0 0 16 15"><path d="M1 3.500 L4.500 2 V12 L1 13.500Z M11.500 3.500 L15 2 V12 L11.500 13.500Z M4.500 2 L6 2.700 M4.500 12 L8 13.500 L11.500 12 M10 2.700 L11.500 2" fill="none" stroke="#5a4ab8" stroke-width="1.200" stroke-linejoin="round"/><path d="M8 1 Q10.300 1 10.300 3.500 Q10.300 5 8 8.500 Q5.700 5 5.700 3.500 Q5.700 1 8 1Z M8 2.600 A1 1 0 0 0 8 4.600 A1 1 0 0 0 8 2.600Z" fill="#5a4ab8" fill-rule="evenodd"/><path d="M8 9 V13" stroke="#5a4ab8" stroke-width="1.200"/></svg>
<svg style="left:447px;top:272px" width="18" height="16" viewBox="0 0 18 16"><path d="M1.500 16 V13 M5 16 V11 M8.500 16 V8 M12 16 V4.500 M15.500 16 V0" stroke="#5a4ab8" stroke-width="2.400"/></svg>
<svg style="left:502px;top:272px" width="16" height="16" viewBox="0 0 16 16"><circle cx="8" cy="8" r="7.500" fill="#5a4ab8"/><path d="M8.400 2.500 Q7.300 5.500 5.400 7 Q3.800 9.300 5.300 11.700 Q6.500 13.300 8 13.300 Q7.200 12 8 10.500 Q8.800 11.700 9.500 13.300 Q12 12 12 9.300 Q12 7 10.400 5.800 Q10.400 7.300 9.600 7.800 Q10 4.800 8.400 2.500Z" fill="#efefef"/></svg>
<div style="left:424px;top:280px;width:5px;height:1.500px;background:#666"></div>
<div style="left:477px;top:280px;width:5px;height:1.500px;background:#666"></div>
<div style="left:530px;top:280px;width:5px;height:1.500px;background:#666"></div>
<svg style="left:555px;top:271px" width="19" height="19" viewBox="0 0 19 19"><g fill="none" stroke="#2a7fc0" stroke-width="1.500"><path d="M1 5 V1 H5 M14 1 H18 V5 M18 14 V18 H14 M5 18 H1 V14"/><path d="M5 5 L14 14 M14 5 L5 14" stroke-width="2"/><path d="M5 8 V5 H8 M11 5 H14 V8 M14 11 V14 H11 M8 14 H5 V11"/></g></svg>
<svg style="left:596px;top:273px" width="22" height="16" viewBox="0 0 22 16"><path d="M0 6.500 L4.500 1 L9 6.500 H6 V11 H13 L15.500 14 H3 V6.500Z M22 9.500 L17.500 15 L13 9.500 H16 V5 H9 L6.500 2 H19 V9.500Z" fill="#444"/></svg>
<svg style="left:642px;top:270px" width="20" height="20" viewBox="0 0 20 20"><circle cx="8" cy="8" r="5.800" fill="none" stroke="#4a35a0" stroke-width="2.200"/><path d="M12.500 12.500 L18 18" stroke="#4a35a0" stroke-width="2.600" stroke-linecap="round"/></svg>
<div style="left:769px;top:270px;width:223px;height:22px;border:1px solid #b4b4b4;background:#fff"></div>
<div class="t" style="left:774px;top:274px;font-size:13.500px;color:#666">Поиск</div>
<div style="left:980px;top:279px;width:0;height:0;border-left:4px solid transparent;border-right:4px solid transparent;border-top:4px solid #555"></div>
<div style="left:994px;top:270px;width:167px;height:22px;border:1px solid #b4b4b4;background:#fff"></div>
<div class="t" style="left:999px;top:274px;font-size:13.500px;color:#333">DefaultHighContrast</div>
<div style="left:1148px;top:279px;width:0;height:0;border-left:4px solid transparent;border-right:4px solid transparent;border-top:4px solid #555"></div>
<svg style="left:341px;top:294px" width="994" height="591" viewBox="341 294 994 591">
<rect x="341" y="294" width="994" height="591" fill="#aeaaa8"/>
<polygon points="341,331 394,331 394,355 363,355 363,379 341,379" fill="#55c85a"/>
<polygon points="476,294 818.5,294 806,342 745,340 745,360.5 779.6,360.5 771.8,409.4 769.6,416 771.8,423.8 787.3,425.9 787.3,438 777.9,438.6 776.8,465 743.7,465.6 742,491.5 690.6,486 686.9,521 648,517.4 651.7,478.6 664.7,476.8 674,408 641,405 506.3,380.5 509.6,346 510,330 476,329" fill="#45b649"/>
<polygon points="437,303 476,304 476,294 437,294" fill="#45b649"/>
<polygon points="707.5,346 727.5,346 727.5,353 707.5,353" fill="#aeaaa8"/>
<polygon points="721,347 727.5,347 727.5,352 721,352" fill="#95a5b8"/>
<polygon points="419,299 429,299 429,304 419,304" fill="#95a5b8"/>
<polygon points="518.5,352.8 525.2,351.7 526.3,357.2 519.6,358.3" fill="#0080ff"/>
<polygon points="579.5,401.6 586.2,399.4 598.4,402.7 596.2,406 586.2,407.2" fill="#55c85a"/>
<polygon points="613.9,407.6 618.3,406.7 620.1,413.8 616.1,414.9" fill="#55c85a"/>
<polygon points="631.7,410.5 641,409.4 641,418.3 637.2,421.6 635,428.2 628.3,424.9" fill="#55c85a"/>
<polygon points="614.3,408.3 617.6,407.2 619.9,413.8 616.5,414.9" fill="#55c85a"/>
<polygon points="631,411.6 640.9,410.5 639.8,418.3 633.2,428.2 628.1,424.9" fill="#55c85a"/>
<polygon points="807.3,336.2 812.9,322.8 817.3,324 814,338.4" fill="#55c85a"/>
<polygon points="354.3,391.6 365.4,389.4 368.7,398.3 357.6,399.4" fill="#55c85a"/>
<polygon points="372.1,393.8 379.8,391.6 380.9,400.5 375.4,411.6 368.7,404.9" fill="#55c85a"/>
<polygon points="385.4,385 394.3,389.4 389.8,398.3 384.3,391.6" fill="#55c85a"/>
<polygon points="348.8,402.7 363.2,404.9 368.7,422.7 362.1,438.2 347.7,440.4 346.5,420.5" fill="#55c85a"/>
<polygon points="378.7,411.6 396.5,407.2 400.9,424.9 416.4,422.7 423.1,431.6 416.4,444.9 392,453.8 388.7,438.2 377.6,438.2 369.8,458.2 365.4,453.8 372.1,427.1" fill="#55c85a"/>
<polygon points="352.1,442.7 359.9,444.9 357.6,449.3 351,447.1" fill="#55c85a"/>
<polygon points="362.1,444.9 365.4,442.7 364.3,452.6 361,453.8" fill="#55c85a"/>
<polygon points="345.4,454.9 354.3,457.1 447.5,489.3 443.1,486.2 448.6,494 429.8,497.3 414.2,488.4 345.4,462.6" fill="#55c85a"/>
<polygon points="409.8,617.1 420.9,617.1 432,616 428.6,626 418.7,630.4 414.2,657.1 394.3,679.3 388.7,679.3 404.2,659.3 409.8,639.3 406.5,626" fill="#c4baad"/>
<polygon points="341,484 345.4,484 380.9,548.3 409.8,617.1 406.5,626 409.8,639.3 404.2,659.3 388.7,679.3 341,690 341,484" fill="#3cb044"/>
<polygon points="341,484 341,462 345.4,484" fill="#3cb044"/>
<polygon points="349.9,484 377.6,484 429.8,499.1 438.6,501.8 447.5,517.3 456.4,541.7 467.5,566.1 485.2,586.1 487.4,604.9 432,616 428.6,618.2 420.9,617.1 415.3,619.3 380.9,548.3" fill="#55c85a"/>
<polygon points="438.6,501.8 443.1,504 521.8,512.8 625,525 627.2,537.3 602.8,552.8 599.5,589.4 581.7,604.9 578.4,604.9 525.2,596 505.2,576.1 485.2,586.1 467.5,566.1 456.4,541.7 447.5,517.3" fill="#c4baad"/>
<polygon points="443.1,504 521.8,512.8 468.6,557.2 464.1,558.3 447.5,517.3" fill="#55c85a"/>
<polygon points="469.7,561.7 518.5,528.4 521.8,520.6 529.6,525 524,548.3 541.8,560.5 549.6,557.2 551.8,579.4 560.7,585 571.8,583.8 578.4,604.9 554,604.9 525.2,596 505.2,576.1 485.2,586.1 469.7,568.3" fill="#55c85a"/>
<polygon points="550.7,528.4 572.9,527.3 570.6,536.1 559.5,533.9 551.8,538.4" fill="#55c85a"/>
<polygon points="577.3,528.4 625,533.9 627.2,542.8 618.3,549.9 588.4,548.3 590.6,533.3" fill="#55c85a"/>
<polygon points="581.7,590.5 591.7,586.1 600.6,589.4 598.4,606 584,604.9" fill="#55c85a"/>
<polygon points="600.6,617.1 605.5,618.7 599.5,631.5 593.9,631.5" fill="#55c85a"/>
<polygon points="549.6,639.3 593.9,633.8 595,636 550.7,642" fill="#55c85a"/>
<polygon points="445.3,659.3 503,649.3 504.1,656 446.4,661.5" fill="#55c85a"/>
<polygon points="412,659.3 418.7,634.9 427.5,648.2 434.2,659.3 429.8,665.9 407.6,672.6" fill="#55c85a"/>
<polygon points="394.3,680.4 414.2,677 447.5,677 449.7,683.9 392,683.9" fill="#55c85a"/>
<polygon points="341,689.4 389.8,685 388.7,691.7 362.1,767.1 341,767.1" fill="#3cb044"/>
<polygon points="341,773.8 356.5,776 347.7,802.6 341,805.9" fill="#3cb044"/>
<polygon points="389.8,685 407.6,685 376.5,771.5 369.8,800.4 352.1,830.3 341,824.8 341,805.9 347.7,802.6 356.5,776 362.1,767.1 388.7,691.7" fill="#c4baad"/>
<polygon points="395.4,698.3 398.7,699.4 367.6,768.2 364.3,767.5" fill="#3cb044"/>
<polygon points="354.3,696.1 360.5,695.7 361.4,702.8 355.4,703.9" fill="#0080ff"/>
<polygon points="407.6,685 447.5,685 440.8,691.7 442,700.5 432,705 426.4,713.8 432,727.2 449.7,739.4 445.3,751.6 449.7,758.2 460.8,769.3 456.4,770.4 445.3,782.6 412,791.5 383.2,801.5 365.4,804.8 369.8,789.3 376.5,771.5" fill="#55c85a"/>
<polygon points="426.4,713.8 432,727.2 449.7,739.4 445.3,751.6 449.7,758.2 460.8,769.3 456.4,782.6 436.4,787.1 456.4,770.4 468.6,747.1 461.9,740.5 454.2,740.5 447.5,751.6 449.7,739.4" fill="#c4baad"/>
<polygon points="454.2,740.5 461.9,739.4 464.8,747.1 453,766 449.7,758.2 451.9,749.3" fill="#55c85a"/>
<polygon points="510.7,791.5 574,764.9 579.5,774.9 536.3,792.6 534,790.4 513,798.2" fill="#55c85a"/>
<polygon points="591.7,778.2 610.6,768.2 625,766 626.1,791.5 596.2,799.3" fill="#5cbd61"/>
<polygon points="464.1,860.3 485.2,857 510.7,862.5 510.7,871.4 506.3,875.8 479.7,873.6 477.5,868 467.5,866.9" fill="#55c85a"/>
<polygon points="353.2,841.4 357.6,841.4 385.4,866.9 394.3,869.2 412,866.9 417.5,875.8 416.4,884.9 378.7,875.8 358.8,858.1 363.2,855.8 353.2,849.2" fill="#0080ff"/>
<polygon points="395.4,814.8 399.8,814.8 402.5,820.3 394.3,820.3" fill="#0080ff"/>
<polygon points="625,700.5 640.5,700.5 640.5,705 633.9,706.1 635,715 629.4,716.1 630.5,726 626.1,726 625,718.3 629.4,713.8 630.5,707.2 625,707.2" fill="#f5dc91"/>
<polygon points="741.9,528.4 763,507.3 790.7,511.7 789.6,536.1" fill="#55c85a"/>
<polygon points="795.2,519.5 820.7,517.3 820.7,538.4 795.2,536.1" fill="#55c85a"/>
<polygon points="763,567.2 766.3,560.5 785.2,559.4 794.1,556.1 808.5,555 811.8,572.8 796.3,576.1 791.8,570.5 776.3,569.4 764.1,571.6" fill="#45b649"/>
<polygon points="791.8,565 796.3,558.3 807.4,557.2 809.6,567.2 802.9,572.8 796.3,571.6" fill="#0080ff"/>
<polygon points="652.1,630.4 718.6,614.9 763,604.9 820.7,597.2 820.7,601.6 763,609.4 718.6,619.3 656.5,633.8" fill="#45b649"/>
<polygon points="654.3,634.9 680.9,629.3 679.8,659.3 677.6,670.4 668.7,657.1 660.9,643.8" fill="#45b649"/>
<polygon points="817.4,656 820.7,656 820.7,672.6 817.4,672.6" fill="#45b649"/>
<polygon points="621,530.6 625.4,529.5 627.7,539.5 621,543.9" fill="#55c85a"/>
<polygon points="626.5,528.4 644.3,530.6 643.2,532.8 627.7,531" fill="#55c85a"/>
<polygon points="621,526.2 624.3,525 625.4,531.7 621,533.9" fill="#c4baad"/>
<polygon points="718.6,665.9 740.8,664.2 738.6,668.2 731.9,670.4" fill="#0080ff"/>
<polygon points="765.2,827 811.8,848.1 802.9,862.5 798.5,884.9 722,884.9 734.2,862.5 745.3,840.3 749.7,831.4 763,830.3" fill="#45b649"/>
<polygon points="867.3,822.6 873.9,811.5 896.1,800.4 907.2,807 898.3,829.2 876.2,844.8 866.2,827" fill="#55c85a"/>
<polygon points="889.5,744.9 897.2,743.8 897.2,749.3 889.5,750.5" fill="#55c85a"/>
<polygon points="807.4,720.5 818.5,720.5 818.5,729.4 807.4,728.3" fill="#55c85a"/>
<polygon points="816.3,751.6 827.3,747.1 829.6,762.7 816.3,762.7" fill="#55c85a"/>
<polygon points="837.3,862.5 844,859.2 849.5,868 841.8,872.5" fill="#55c85a"/>
<polygon points="857.3,875.8 876.2,862.5 887.3,878 876.2,884.9 862.8,884.9" fill="#55c85a"/>
<polygon points="693.1,870.3 699.8,866.9 709.8,873.6 703.1,880.3" fill="#55c85a"/>
<polygon points="696.4,687.2 702,685 707.5,696.1 702,700.5 696.4,693.9" fill="#55c85a"/>
<polygon points="621,767.1 625.4,766 625.4,791.5 621,792.6" fill="#5cbd61"/>
<polygon points="824,805.9 828.5,803.7 834,812.6 829.6,815.9" fill="#55c85a"/>
<polygon points="774.1,811.5 798.5,822.6 796.3,827 771.9,815.9" fill="#55c85a"/>
<polygon points="749.7,831.4 760.8,830.3 745.3,858.1 736.4,855.8" fill="#45b649"/>
<polygon points="714.2,685 725.3,685 718.6,691.7 714.2,688.3" fill="#f0b8b8"/>
<polygon points="717.5,697.2 726.4,695 727.5,703.9 719.7,706.1" fill="#f0b8b8"/>
<polygon points="625.4,701.6 636.5,700.5 641,702.8 634.3,706.1 635.4,715 628.8,717.2 631,726 626.5,726 624.3,718.3 629.9,713.8 631,707.2 625.4,707.2" fill="#f5dc91"/>
<polygon points="818.5,774.9 834,772.6 840.7,782.6 838.4,788.2 828.5,788.2 828.5,791.5 816.3,791.5 816.3,784.8" fill="#f5dc91"/>
<polygon points="736.4,700.5 741.9,700.5 743,708.3 737.5,708.3" fill="#95a5b8"/>
<polygon points="805.2,790.4 811.8,789.3 811.8,798.2 806.3,798.2" fill="#95a5b8"/>
<polygon points="717.1,789.7 719.3,789.7 722.6,795.3 751.9,808.6 750.8,811 721.5,797.5" fill="#0080ff"/>
<polygon points="865.3,823.2 877.8,810.7 898,800.6 906.8,808.1 898,833.3 882.9,845.9 870.3,835.8" fill="#55c85a"/>
<polygon points="837.6,861 847.7,857.2 852.7,866 843.9,873.5" fill="#55c85a"/>
<polygon points="867.8,863.5 880.4,858.5 892.9,871 875.3,884.9" fill="#55c85a"/>
<polygon points="820,740.2 823.8,740.2 820,765.4" fill="#55c85a"/>
<polygon points="1056.4,793.1 1160,793.1 1160,796.8 1056.4,796.8" fill="#55c85a"/>
<polygon points="1128.1,848.4 1160,848.4 1160,862.2 1128.1,862.2" fill="#55c85a"/>
<polygon points="1071.5,835.8 1075.3,835.8 1075.3,845.9 1071.5,845.9" fill="#55c85a"/>
<polygon points="1124.3,817 1131.9,815.7 1131.9,819.5 1124.3,819.5" fill="#55c85a"/>
<polygon points="1104.2,764.1 1109.2,764.1 1109.2,769.2 1104.2,769.2" fill="#f0b8b8"/>
<polygon points="1102.9,872.3 1121.8,872.3 1121.8,878.6 1102.9,878.6" fill="#f0b8b8"/>
<polygon points="820,775.5 835.1,772.9 837.6,785.5 820,789.3" fill="#f5dc91"/>
<polygon points="823.8,805.6 830.1,803.1 835.1,813.2 828.8,815.7" fill="#55c85a"/>
<polygon points="900,741.4 935.5,741.4 900,745.9" fill="#45b649"/>
<polygon points="985.8,741.4 1006.5,741.4 1018.3,769.5 1042,787.3 985.8,787.3" fill="#45b649"/>
<polygon points="1007.2,742.2 1020.6,742.2 1025.7,757 1018.3,756.2 1012.4,751.8" fill="#0080ff"/>
<polygon points="1022.8,742.2 1030.2,742.2 1033.9,759.2 1027.2,757.7" fill="#0080ff"/>
<polygon points="1018.3,769.5 1022.8,772.5 1036.1,771 1041.3,781.4 1037.6,779.9 1033.1,774 1021.3,773.2" fill="#0080ff"/>
<polyline points="1030.2,749.6 1046.4,743.2" fill="none" stroke="#0080ff" stroke-width="1.5" stroke-linejoin="round" />
<polygon points="1282.7,294 1335,294 1335,494 1254.1,494 1223.2,448.4 1210,399.8 1229.8,402 1278.3,428.5 1278.3,373.4 1255.2,357.9 1262.9,324.9" fill="#c4baad"/>
<polygon points="1153.7,470.4 1168.1,469.3 1182.4,478.1 1176.9,488 1153.7,477" fill="#c4baad"/>
<polygon points="1326.8,421.9 1335,426.3 1335,448.4 1327.9,457.2 1322.4,452.8" fill="#aeaaa8"/>
<polygon points="1223.2,294 1282.7,294 1262.9,324.9 1221,308.3" fill="#45b649"/>
<polygon points="1153.7,420.8 1168.1,413.1 1210,402 1223.2,404.3 1258.5,430.7 1272.8,448.4 1273.9,463.8 1254.1,494 1229.8,494 1182.4,478.1 1168.1,469.3 1153.7,470.4" fill="#55c85a"/>
<polygon points="1277.2,356.8 1282.7,371.2 1293.8,382.2 1326.8,385.5 1326.8,391 1291.6,385.5 1280.5,375.6" fill="#0080ff"/>
<polygon points="1300.4,297.3 1335,296.2 1335,307.2 1329,300.6 1302.6,299.5" fill="#0080ff"/>
<polygon points="1176.9,485.8 1182.4,478.1 1186.8,481.4 1180.2,489.1" fill="#0080ff"/>
<polygon points="1322.4,488 1335,483.6 1335,494 1320.2,494" fill="#0080ff"/>
<polygon points="1322.4,413.1 1335,421.9 1335,430.7 1324.6,424.1" fill="#55c85a"/>
<polyline points="1262.9,479.2 1278.3,470.4" fill="none" stroke="#0080ff" stroke-width="1.2" stroke-linejoin="round" />
<polyline points="1289.4,477 1293.8,485.8 1290.5,494" fill="none" stroke="#0080ff" stroke-width="1.2" stroke-linejoin="round" />
<polyline points="1262.9,324.9 1282.7,294" fill="none" stroke="#fff" stroke-width="1.5" stroke-linejoin="round" />
<polygon points="1261,480 1335,480 1335,545 1290,524.8 1262.7,531.7 1224,544.8 1173.2,552.5 1170,541.7 1154.6,540.2 1154.6,535 1173.2,532.5 1239.5,514.7" fill="#c4baad"/>
<polygon points="1187.9,479.6 1265.1,479.6 1239.7,512.7 1227.6,508.3" fill="#55c85a"/>
<polygon points="1210,549 1238.6,541.3 1262.9,532.5 1268.4,547.9 1267.3,561.2 1257.4,565.6 1211.1,559" fill="#45b649"/>
<polygon points="1283.8,568.9 1299.3,568.9 1299.3,594.3 1283.8,593.2" fill="#95a5b8"/>
<polygon points="1299.3,646.1 1307,640.6 1308.1,643.2 1300.4,649.4" fill="#55c85a"/>
<polygon points="1158.2,503.8 1162.6,504.9 1165.9,528.1 1161.5,528.1" fill="#55c85a"/>
<polygon points="1153.7,539.1 1170.3,541.3 1169.2,556.8 1163.7,574.4 1153.7,576.6" fill="#0080ff"/>
<polygon points="1175.8,484 1184.6,484 1179.1,488.4" fill="#0080ff"/>
<polygon points="1176.9,540.2 1184.6,544.6 1182.4,545.7" fill="#0080ff"/>
<polygon points="1203.4,579.9 1207.8,579.9 1207.3,586.5 1202.9,586.5" fill="#0080ff"/>
<polygon points="1153.7,625.1 1159.3,627.3 1155.9,638.4 1153.7,638.4" fill="#0080ff"/>
<polygon points="1160.4,663.7 1164.8,667 1159.7,666.6" fill="#0080ff"/>
<polygon points="1326.8,484 1335,486.2 1335,497.2 1322.4,492.8" fill="#0080ff"/>
<polygon points="1326.8,506.1 1335,503.8 1335,517.1 1329,514.9" fill="#0080ff"/>
<polygon points="1271.7,600.9 1280.5,599.8 1279.4,603.1" fill="#0080ff"/>
<polygon points="1299.3,600.9 1305.9,600.4 1302.6,603.1" fill="#0080ff"/>
<polygon points="1327.9,551.3 1335,554.6 1335,556.8" fill="#0080ff"/>
<polyline points="1290.5,484 1292.7,495 1311.4,499.4 1322.4,497.2" fill="none" stroke="#0080ff" stroke-width="1.2" stroke-linejoin="round" />
<polygon points="1153.7,670.3 1169.2,670.3 1170.3,678 1153.7,678" fill="#45b649"/>
<polygon points="1197.8,710.4 1221,709.3 1222.1,704.8 1240.8,704.8 1241.9,693.8 1244.2,693.8 1245.3,704.8 1249.7,704.8 1250.8,724.7 1245.3,725.8 1245.3,735.7 1229.8,736.8 1229.8,721.4 1198.9,721.4" fill="#55c85a"/>
<polygon points="1223.2,709.3 1232,705.9 1244.2,708.2 1245.3,734.6 1232,735.7 1230.9,721.4 1222.1,720.3" fill="#0080ff"/>
<polygon points="1204.5,713.7 1211.1,711.5 1216.6,714.8 1215.5,719.2 1207.8,720.3 1203.8,718.1" fill="#0080ff"/>
<polygon points="1299.3,789.7 1329,788.6 1331.3,801.9 1323.5,804.1 1299.3,795.3" fill="#45b649"/>
<polygon points="1318,861.4 1335,846 1335,885 1309.2,885" fill="#45b649"/>
<polygon points="1135,793 1249.7,793 1249.7,796.4 1135,796.4" fill="#55c85a"/>
<polygon points="1135,849.3 1147.1,849.3 1147.1,861.4 1135,861.4" fill="#45b649"/>
<polygon points="1222.1,848.2 1228.7,848.2 1228.7,859.2 1222.1,859.2" fill="#45b649"/>
<polygon points="1179.1,799.7 1191.9,798.6 1192.3,805.2 1186.8,805.8 1186.8,829.4 1182.4,829.9 1180.2,817.3" fill="#f5dc91"/>
<polygon points="1264,795.3 1287.1,794.2 1289.4,797.5 1310.3,807.4 1310.3,820.6 1281.6,819.5 1280.5,810.7 1267.3,811.8" fill="#f5dc91"/>
<polygon points="1178,832.7 1210,832.7 1210,851.5 1178,851.5" fill="#95a5b8"/>
<polygon points="1178,690.5 1187.9,690.5 1187.9,694.9 1178,694.9" fill="#95a5b8"/>
<polygon points="1153.7,685 1173.6,685 1173.6,689.4 1153.7,689.4" fill="#0080ff"/>
<polygon points="1267.3,884.6 1287.1,881.3 1289.4,885 1267.3,885" fill="#45b649"/>
<polygon points="957,294 1002,294 996,305 985,309 965,309" fill="#45b649"/>
<circle cx="904.5" cy="308" r="6" fill="#f0b8b8"/>
<polyline points="438.6,501.8 447.5,517.3 456.4,541.7 467.5,566.1 485.2,586.1" fill="none" stroke="#c4baad" stroke-width="2.6" stroke-linejoin="round" />
<polyline points="521.8,512.8 468.6,557.2 465.3,560.5" fill="none" stroke="#c4baad" stroke-width="3" stroke-linejoin="round" />
<polyline points="429.8,497.3 438.6,501.8" fill="none" stroke="#c4baad" stroke-width="3" stroke-linejoin="round" />
<polyline points="341,690 487,665 641,635 820.7,608" fill="none" stroke="#b9b6b4" stroke-width="6" stroke-linejoin="round" />
<polyline points="341,689 487,664 641,634 820.7,607" fill="none" stroke="#7d8aa0" stroke-width="1" stroke-linejoin="round" />
<polyline points="341,692 487,667 641,637 820.7,610" fill="none" stroke="#7d8aa0" stroke-width="1" stroke-linejoin="round" />
<polyline points="341,460.4 363,478 405,488 452,492.6 487.4,474.8" fill="none" stroke="#7d8aa0" stroke-width="1" stroke-linejoin="round" />
<polyline points="341,463 360,481 400,491" fill="none" stroke="#7d8aa0" stroke-width="1" stroke-linejoin="round" />
<polyline points="506.3,685 456.4,778.2 449.7,793.7" fill="none" stroke="#7d8aa0" stroke-width="1" stroke-linejoin="round" />
<polyline points="456,779 462,790" fill="none" stroke="#7d8aa0" stroke-width="1" stroke-linejoin="round" />
<polyline points="1173,550 1239,523 1278,519 1335,538" fill="none" stroke="#7d8aa0" stroke-width="1" stroke-linejoin="round" />
<polyline points="826,800 815,770 820,745" fill="none" stroke="#7d8aa0" stroke-width="1" stroke-linejoin="round" />
<polyline points="400.5,294 399.1,304" fill="none" stroke="#fff" stroke-width="1.5" stroke-linejoin="round" />
<polyline points="397.6,347.3 394.9,398.3" fill="none" stroke="#fff" stroke-width="1.5" stroke-linejoin="round" />
<polyline points="429.8,294 428.9,304" fill="none" stroke="#fff" stroke-width="1.5" stroke-linejoin="round" />
<polyline points="427.5,347.3 424.2,424.9" fill="none" stroke="#fff" stroke-width="1.5" stroke-linejoin="round" />
<polyline points="397.6,379 426.4,379.6" fill="none" stroke="#fff" stroke-width="1.5" stroke-linejoin="round" />
<polyline points="460.8,347.3 460.4,363.9" fill="none" stroke="#fff" stroke-width="1.5" stroke-linejoin="round" />
<polyline points="476.8,294 475,327.3" fill="none" stroke="#fff" stroke-width="1.5" stroke-linejoin="round" />
<polyline points="497.4,294 495.6,327.3" fill="none" stroke="#fff" stroke-width="1.5" stroke-linejoin="round" />
<polyline points="519.6,294 517.8,327.3" fill="none" stroke="#fff" stroke-width="1.5" stroke-linejoin="round" />
<polyline points="571.8,294 570,327.3" fill="none" stroke="#fff" stroke-width="1.5" stroke-linejoin="round" />
<polyline points="602.8,294 601,327.3" fill="none" stroke="#fff" stroke-width="1.5" stroke-linejoin="round" />
<polyline points="630.5,294 628.8,327.3" fill="none" stroke="#fff" stroke-width="1.5" stroke-linejoin="round" />
<polyline points="629.4,294 628.7,304" fill="none" stroke="#fff" stroke-width="1.5" stroke-linejoin="round" />
<polyline points="652,294 651.6,304" fill="none" stroke="#fff" stroke-width="1.5" stroke-linejoin="round" />
<polyline points="694.2,294 693.7,304" fill="none" stroke="#fff" stroke-width="1.5" stroke-linejoin="round" />
<polyline points="733,294 731.9,304" fill="none" stroke="#fff" stroke-width="1.5" stroke-linejoin="round" />
<polyline points="748.5,294 745.2,340.6" fill="none" stroke="#fff" stroke-width="1.5" stroke-linejoin="round" />
<polyline points="782.9,294 781.8,340.6" fill="none" stroke="#fff" stroke-width="1.5" stroke-linejoin="round" />
<polyline points="801.8,318.4 800.7,340.6" fill="none" stroke="#fff" stroke-width="1.5" stroke-linejoin="round" />
<polyline points="673.1,343.9 672.4,366.1 700.8,388.3 763,390.5 819.5,407.2" fill="none" stroke="#fff" stroke-width="1.5" stroke-linejoin="round" />
<polyline points="689.8,343.9 689.8,358.3" fill="none" stroke="#fff" stroke-width="1.5" stroke-linejoin="round" />
<polyline points="698.6,346.1 698.6,359.5 745.2,361.7 819.5,370.5" fill="none" stroke="#fff" stroke-width="1.5" stroke-linejoin="round" />
<polyline points="707.5,348.4 705.7,396.1" fill="none" stroke="#fff" stroke-width="1.5" stroke-linejoin="round" />
<polyline points="727.5,348.4 725.7,397.2 743,398.3" fill="none" stroke="#fff" stroke-width="1.5" stroke-linejoin="round" />
<polyline points="745.2,343.9 744.1,403.8 770.7,409.4" fill="none" stroke="#fff" stroke-width="1.5" stroke-linejoin="round" />
<polyline points="756.3,346.1 756.3,360.6" fill="none" stroke="#fff" stroke-width="1.5" stroke-linejoin="round" />
<polyline points="768.5,346.1 767.4,360.6" fill="none" stroke="#fff" stroke-width="1.5" stroke-linejoin="round" />
<polyline points="781.8,346.1 781.2,360.6" fill="none" stroke="#fff" stroke-width="1.5" stroke-linejoin="round" />
<polyline points="798.5,341.7 798.5,352.8 781.8,353.5" fill="none" stroke="#fff" stroke-width="1.5" stroke-linejoin="round" />
<polyline points="825.1,294 901,318.4" fill="none" stroke="#fff" stroke-width="1.5" stroke-linejoin="round" />
<polyline points="851.7,294 850.6,307.3" fill="none" stroke="#fff" stroke-width="1.5" stroke-linejoin="round" />
<polyline points="878.3,294 877.2,307.3" fill="none" stroke="#fff" stroke-width="1.5" stroke-linejoin="round" />
<polyline points="745.4,435.8 777.9,438.6 795,438.6" fill="none" stroke="#fff" stroke-width="1.5" stroke-linejoin="round" />
<polyline points="777.9,438.6 776.8,490.4 767.4,500" fill="none" stroke="#fff" stroke-width="1.5" stroke-linejoin="round" />
<polyline points="787.3,438.6 786.2,472.8 792,476" fill="none" stroke="#fff" stroke-width="1.5" stroke-linejoin="round" />
<polyline points="743.7,474.4 820.9,476" fill="none" stroke="#fff" stroke-width="1.5" stroke-linejoin="round" />
<polyline points="777.3,490.4 820.9,491" fill="none" stroke="#fff" stroke-width="1.5" stroke-linejoin="round" />
<polyline points="796,444 818,444" fill="none" stroke="#fff" stroke-width="1.5" stroke-linejoin="round" />
<polyline points="817,444 817,422 820.9,410" fill="none" stroke="#fff" stroke-width="1.5" stroke-linejoin="round" />
<polyline points="792.8,400 820.9,407.7" fill="none" stroke="#fff" stroke-width="1.5" stroke-linejoin="round" />
<polyline points="434.2,651.5 522.9,634.9 516.3,617.1 509.6,612.7 494.1,597.2" fill="none" stroke="#fff" stroke-width="1.5" stroke-linejoin="round" />
<polyline points="501.9,604.9 517.4,589.4 525.2,597.2 509.6,612.7" fill="none" stroke="#fff" stroke-width="1.5" stroke-linejoin="round" />
<polyline points="610.6,656 621.7,682.6 641,675.9" fill="none" stroke="#fff" stroke-width="1.5" stroke-linejoin="round" />
<polyline points="510.7,808.1 504.1,845.9 519.6,848.7 529.6,810.4" fill="none" stroke="#fff" stroke-width="1.5" stroke-linejoin="round" />
<polyline points="506.3,827 546.2,834.8 549.6,814.8" fill="none" stroke="#fff" stroke-width="1.5" stroke-linejoin="round" />
<polyline points="505.2,834.8 522.9,838.1" fill="none" stroke="#fff" stroke-width="1.5" stroke-linejoin="round" />
<polyline points="536.3,813.7 534,832.5" fill="none" stroke="#fff" stroke-width="1.5" stroke-linejoin="round" />
<polyline points="539.6,811.5 549.6,814.8" fill="none" stroke="#fff" stroke-width="1.5" stroke-linejoin="round" />
<polyline points="551.8,871.4 550.7,875.8 574,883.6" fill="none" stroke="#fff" stroke-width="1.5" stroke-linejoin="round" />
<polyline points="621.7,685 641,731.6" fill="none" stroke="#fff" stroke-width="1.5" stroke-linejoin="round" />
<polyline points="628.3,702.8 641,698.3" fill="none" stroke="#fff" stroke-width="1.5" stroke-linejoin="round" />
<polyline points="622.8,747.1 627.2,791.5 641,804.8" fill="none" stroke="#fff" stroke-width="1.5" stroke-linejoin="round" />
<polyline points="627.2,791.5 605,798.2 585.1,818.1" fill="none" stroke="#fff" stroke-width="1.5" stroke-linejoin="round" />
<polyline points="605,798.2 618.3,818.1 607.3,829.2 587.3,818.1" fill="none" stroke="#fff" stroke-width="1.5" stroke-linejoin="round" />
<polyline points="618.3,795.9 621.7,800.4 613.9,808.1" fill="none" stroke="#fff" stroke-width="1.5" stroke-linejoin="round" />
<polyline points="641,840.3 627.2,862.5" fill="none" stroke="#fff" stroke-width="1.5" stroke-linejoin="round" />
<polyline points="607.3,884.9 613.9,873.6 629.4,869.2" fill="none" stroke="#fff" stroke-width="1.5" stroke-linejoin="round" />
<polyline points="776.3,490.7 741.9,528.4" fill="none" stroke="#fff" stroke-width="1.5" stroke-linejoin="round" />
<polyline points="776.3,484 776.3,490.7 820.7,490.7" fill="none" stroke="#fff" stroke-width="1.5" stroke-linejoin="round" />
<polyline points="793,484 793,537.3" fill="none" stroke="#fff" stroke-width="1.5" stroke-linejoin="round" />
<polyline points="793,516.2 820.7,516.2" fill="none" stroke="#fff" stroke-width="1.5" stroke-linejoin="round" />
<polyline points="706.4,647.1 718.6,647.1 725.3,652.6 751.9,652.6 751.9,683.9" fill="none" stroke="#fff" stroke-width="1.5" stroke-linejoin="round" />
<polyline points="718.6,647.1 717.5,637.1 723.1,633.8 750.8,633.1 753,654.8" fill="none" stroke="#fff" stroke-width="1.5" stroke-linejoin="round" />
<polyline points="751.9,656 820.7,654.8" fill="none" stroke="#fff" stroke-width="1.5" stroke-linejoin="round" />
<polyline points="789.6,626 790.7,683.9" fill="none" stroke="#fff" stroke-width="1.5" stroke-linejoin="round" />
<polyline points="789.6,631.5 820.7,629.3" fill="none" stroke="#fff" stroke-width="1.5" stroke-linejoin="round" />
<polyline points="776.3,652.6 776.3,672.6 820.7,672.6" fill="none" stroke="#fff" stroke-width="1.5" stroke-linejoin="round" />
<polyline points="805.2,656 805.2,672.6" fill="none" stroke="#fff" stroke-width="1.5" stroke-linejoin="round" />
<polyline points="794.1,656 794.1,672.6" fill="none" stroke="#fff" stroke-width="1.5" stroke-linejoin="round" />
<polyline points="621,679.3 636.5,675.9 643.2,683.9" fill="none" stroke="#fff" stroke-width="1.5" stroke-linejoin="round" />
<polyline points="660.9,644.9 674.3,670.4 678.7,683.9" fill="none" stroke="#fff" stroke-width="1.5" stroke-linejoin="round" />
<polyline points="627.7,700.5 644.3,693.9 642.1,685" fill="none" stroke="#fff" stroke-width="1.5" stroke-linejoin="round" />
<polyline points="627.7,700.5 645.4,756 668.7,770.4 676.5,763.8 683.1,769.3" fill="none" stroke="#fff" stroke-width="1.5" stroke-linejoin="round" />
<polyline points="705.3,730.5 706.4,780.4 754.1,805.9 763,793.7" fill="none" stroke="#fff" stroke-width="1.5" stroke-linejoin="round" />
<polyline points="705.3,730.5 736.4,732.7 778.5,718.3" fill="none" stroke="#fff" stroke-width="1.5" stroke-linejoin="round" />
<polyline points="736.4,685 736.4,718.3" fill="none" stroke="#fff" stroke-width="1.5" stroke-linejoin="round" />
<polyline points="736.4,698.3 778.5,698.3 780.8,758.2 771.9,787.1 760.8,793.7" fill="none" stroke="#fff" stroke-width="1.5" stroke-linejoin="round" />
<polyline points="754.1,685 754.1,697.2" fill="none" stroke="#fff" stroke-width="1.5" stroke-linejoin="round" />
<polyline points="763,698.3 763,708.3" fill="none" stroke="#fff" stroke-width="1.5" stroke-linejoin="round" />
<polyline points="656.5,819.2 687.6,840.3 729.7,855.8" fill="none" stroke="#fff" stroke-width="1.5" stroke-linejoin="round" />
<polyline points="706.4,849.2 687.6,878 694.2,884.9" fill="none" stroke="#fff" stroke-width="1.5" stroke-linejoin="round" />
<polyline points="621,827 649.8,855.8 665.4,884.9" fill="none" stroke="#fff" stroke-width="1.5" stroke-linejoin="round" />
<polyline points="647.6,809.3 621,789.3" fill="none" stroke="#fff" stroke-width="1.5" stroke-linejoin="round" />
<polyline points="760.8,793.7 798.5,810.4 807.4,822.6" fill="none" stroke="#fff" stroke-width="1.5" stroke-linejoin="round" />
<polyline points="767.4,800.4 778.5,803.7 771.9,815.9" fill="none" stroke="#fff" stroke-width="1.5" stroke-linejoin="round" />
<polyline points="777.4,760.4 816.3,762.7 834,762.7" fill="none" stroke="#fff" stroke-width="1.5" stroke-linejoin="round" />
<polyline points="820.7,740.5 838.4,762.7 860.6,815.9" fill="none" stroke="#fff" stroke-width="1.5" stroke-linejoin="round" />
<polyline points="825.1,818.1 834,811.5 865.1,795.9 921,789.3" fill="none" stroke="#fff" stroke-width="1.5" stroke-linejoin="round" />
<polyline points="827.3,820.3 834,840.3" fill="none" stroke="#fff" stroke-width="1.5" stroke-linejoin="round" />
<polyline points="834,840.3 851.8,860.3 842.9,880.3" fill="none" stroke="#fff" stroke-width="1.5" stroke-linejoin="round" />
<polyline points="851.8,860.3 882.8,840.3" fill="none" stroke="#fff" stroke-width="1.5" stroke-linejoin="round" />
<polyline points="862.8,740.5 869.5,751.6 898.3,742.7" fill="none" stroke="#fff" stroke-width="1.5" stroke-linejoin="round" />
<polyline points="869.5,751.6 834,762.7" fill="none" stroke="#fff" stroke-width="1.5" stroke-linejoin="round" />
<polyline points="896.1,740.5 900.6,758.2" fill="none" stroke="#fff" stroke-width="1.5" stroke-linejoin="round" />
<polyline points="820.7,829.2 814,840.3" fill="none" stroke="#fff" stroke-width="1.5" stroke-linejoin="round" />
<polyline points="823.8,762.9 870.3,754.1 895.5,747.8" fill="none" stroke="#fff" stroke-width="1.5" stroke-linejoin="round" />
<polyline points="860.2,741.5 870.3,754.1" fill="none" stroke="#fff" stroke-width="1.5" stroke-linejoin="round" />
<polyline points="820,783 852.7,813.2 865.3,823.2" fill="none" stroke="#fff" stroke-width="1.5" stroke-linejoin="round" />
<polyline points="852.7,813.2 820,840.8" fill="none" stroke="#fff" stroke-width="1.5" stroke-linejoin="round" />
<polyline points="837.6,855.9 870.3,835.8" fill="none" stroke="#fff" stroke-width="1.5" stroke-linejoin="round" />
<polyline points="852.7,876.1 882.9,850.9 906.8,840.8" fill="none" stroke="#fff" stroke-width="1.5" stroke-linejoin="round" />
<polyline points="827.5,840.8 852.7,876.1 860.2,886.1" fill="none" stroke="#fff" stroke-width="1.5" stroke-linejoin="round" />
<polyline points="882.9,850.9 903,884.9" fill="none" stroke="#fff" stroke-width="1.5" stroke-linejoin="round" />
<polyline points="957.8,740.2 957.8,866 963.4,867.3" fill="none" stroke="#fff" stroke-width="1.5" stroke-linejoin="round" />
<polyline points="1056.4,793.1 1056.4,886.1" fill="none" stroke="#fff" stroke-width="1.5" stroke-linejoin="round" />
<polyline points="1091.6,740.2 1091.6,886.1" fill="none" stroke="#fff" stroke-width="1.5" stroke-linejoin="round" />
<polyline points="1128.1,830.8 1128.1,886.1" fill="none" stroke="#fff" stroke-width="1.5" stroke-linejoin="round" />
<polyline points="1018.7,830.8 1018.7,886.1" fill="none" stroke="#fff" stroke-width="1.5" stroke-linejoin="round" />
<polyline points="984.7,830.8 1160,830.8" fill="none" stroke="#fff" stroke-width="1.5" stroke-linejoin="round" />
<polyline points="960.8,866 1018.7,866" fill="none" stroke="#fff" stroke-width="1.5" stroke-linejoin="round" />
<polyline points="1091.6,765.4 1105.5,764.1 1105.5,789.3" fill="none" stroke="#fff" stroke-width="1.5" stroke-linejoin="round" />
<polyline points="1091.6,765.4 1160,762.9" fill="none" stroke="#fff" stroke-width="1.5" stroke-linejoin="round" />
<polyline points="930.7,873.5 960.8,866" fill="none" stroke="#fff" stroke-width="1.5" stroke-linejoin="round" />
<polyline points="1309.2,603.1 1329,563.4 1335,564.5" fill="none" stroke="#fff" stroke-width="1.5" stroke-linejoin="round" />
<polyline points="1322.4,578.8 1335,583.2" fill="none" stroke="#fff" stroke-width="1.5" stroke-linejoin="round" />
<polyline points="1315.8,592 1335,598.7" fill="none" stroke="#fff" stroke-width="1.5" stroke-linejoin="round" />
<polyline points="1329,563.4 1335,550.2" fill="none" stroke="#fff" stroke-width="1.5" stroke-linejoin="round" />
<polyline points="1153.7,622.9 1171.4,626.2" fill="none" stroke="#fff" stroke-width="1.5" stroke-linejoin="round" />
<polyline points="1298.6,665.9 1298.6,684" fill="none" stroke="#fff" stroke-width="1.5" stroke-linejoin="round" />
<polyline points="1263.6,567.8 1263.6,684" fill="none" stroke="#fff" stroke-width="1.5" stroke-linejoin="round" />
<polyline points="1175.8,739 1298.2,739" fill="none" stroke="#fff" stroke-width="1.5" stroke-linejoin="round" />
<polyline points="1135,830.5 1258.5,830.5" fill="none" stroke="#fff" stroke-width="1.5" stroke-linejoin="round" />
<polyline points="1298.6,685 1298.6,788.6" fill="none" stroke="#fff" stroke-width="1.5" stroke-linejoin="round" />
<polyline points="1263.6,685 1263.6,885" fill="none" stroke="#fff" stroke-width="1.5" stroke-linejoin="round" />
<polyline points="1258.5,830.5 1298.2,861.4 1302.6,885" fill="none" stroke="#fff" stroke-width="1.5" stroke-linejoin="round" />
<polyline points="1271.7,839.4 1322.4,799.7" fill="none" stroke="#fff" stroke-width="1.5" stroke-linejoin="round" />
<polyline points="1298.2,861.4 1326.8,837.1 1335,826.1" fill="none" stroke="#fff" stroke-width="1.5" stroke-linejoin="round" />
<polyline points="1324.6,808.5 1335,817.3" fill="none" stroke="#fff" stroke-width="1.5" stroke-linejoin="round" />
<polyline points="1311.4,885 1329,821.7 1335,808.5" fill="none" stroke="#fff" stroke-width="1.5" stroke-linejoin="round" />
<polyline points="1276.1,885 1302.6,874.6 1335,843.8" fill="none" stroke="#fff" stroke-width="1.5" stroke-linejoin="round" />
<polyline points="1155.9,739 1157.1,885" fill="none" stroke="#fff" stroke-width="1.5" stroke-linejoin="round" />
<polyline points="1135,739 1172.5,739" fill="none" stroke="#fff" stroke-width="1.5" stroke-linejoin="round" />
<polyline points="579.5,294 579.5,885" fill="none" stroke="rgba(255,255,255,0.11)" stroke-width="1" stroke-linejoin="round" />
<polyline points="867.5,294 867.5,885" fill="none" stroke="rgba(255,255,255,0.11)" stroke-width="1" stroke-linejoin="round" />
<polyline points="1155.5,294 1155.5,885" fill="none" stroke="rgba(255,255,255,0.11)" stroke-width="1" stroke-linejoin="round" />
<polyline points="341,515 1335,515" fill="none" stroke="rgba(255,255,255,0.11)" stroke-width="1" stroke-linejoin="round" />
<polyline points="341,803 1335,803" fill="none" stroke="rgba(255,255,255,0.11)" stroke-width="1" stroke-linejoin="round" />
<polyline points="995,294 1012,303 1030,309" fill="none" stroke="#fff" stroke-width="1.5" stroke-linejoin="round" />
<polyline points="905,294 903,309" fill="none" stroke="#fff" stroke-width="1.5" stroke-linejoin="round" />
<polyline points="860,294 856,309" fill="none" stroke="#fff" stroke-width="1.5" stroke-linejoin="round" />
<polyline points="476,328.5 762,341.5 818,345.5" fill="none" stroke="#fff" stroke-width="3.5" stroke-linejoin="round" />
<polyline points="341,384.5 374,385 504,493.7 509.6,498.4 621,517.3 707.5,526 820.7,540.6" fill="none" stroke="#fff" stroke-width="2.9" stroke-linejoin="round" />
<polyline points="341,471.5 345.4,484 381,548 418.6,625 450,677 454,681.5" fill="none" stroke="#fff" stroke-width="3.1" stroke-linejoin="round" />
<polyline points="453,681.3 641,647 663,642.6 696.4,684 702,713.8 703,729.4 698.7,749.3 681,773.8 621,862.5 606,885" fill="none" stroke="#fff" stroke-width="3.5" stroke-linejoin="round" />
<polyline points="341,768.2 574,815.9" fill="none" stroke="#fff" stroke-width="4.4" stroke-linejoin="round" />
<polyline points="579.5,816 641,871 657,885" fill="none" stroke="#fff" stroke-width="2.5" stroke-linejoin="round" />
<polyline points="575,820 637,876 647,885" fill="none" stroke="#fff" stroke-width="2.5" stroke-linejoin="round" />
<circle cx="577.3" cy="816.4" r="6.5" fill="#fff"/><circle cx="577.3" cy="816.4" r="2.3" fill="#55c85a"/>
<polyline points="577,812.6 576,804.8 622.8,745 641,736 672,722.7 698.7,720.5 820.7,717" fill="none" stroke="#fff" stroke-width="3.4" stroke-linejoin="round" />
<polyline points="681,778 754,812.6 816,844.7" fill="none" stroke="#fff" stroke-width="3.6" stroke-linejoin="round" />
<polyline points="756,812.6 721,885" fill="none" stroke="#fff" stroke-width="2.5" stroke-linejoin="round" />
<polyline points="751,812.6 714,885" fill="none" stroke="#fff" stroke-width="2.5" stroke-linejoin="round" />
<polyline points="1335,813 1300,793 1290,790 960.8,789.5 921,791.5 905.5,794.3 870.3,808 816,847 805,862.5 800.7,885" fill="none" stroke="#fff" stroke-width="6.5" stroke-linejoin="round" />
<polyline points="820,846 870.3,811" fill="none" stroke="#fff" stroke-width="3" stroke-linejoin="round" />
<polyline points="820.7,740.5 834,762.7 842.6,770.4 865,827 885,867 915.6,883.6" fill="none" stroke="#fff" stroke-width="3" stroke-linejoin="round" />
<polyline points="834,762.7 870,754 895,748 921,745 960,741" fill="none" stroke="#fff" stroke-width="3" stroke-linejoin="round" />
<polyline points="897.5,740 932.5,885" fill="none" stroke="#fff" stroke-width="2.5" stroke-linejoin="round" />
<polyline points="902,740 937,885" fill="none" stroke="#fff" stroke-width="2.5" stroke-linejoin="round" />
<polyline points="899.7,740 934.7,885" fill="none" stroke="#55c85a" stroke-width="1.2" stroke-linejoin="round" />
<polyline points="825,294 809.6,360.6 803,394 796,409.4 795,440" fill="none" stroke="#fff" stroke-width="3" stroke-linejoin="round" />
<polyline points="795,440 795,494 795,540" fill="none" stroke="#fff" stroke-width="2" stroke-linejoin="round" />
<polyline points="1153,686.8 1335,686.8" fill="none" stroke="#fff" stroke-width="4" stroke-linejoin="round" />
<polyline points="1170.5,545 1175.8,684 1175,885" fill="none" stroke="#fff" stroke-width="4" stroke-linejoin="round" />
<polyline points="1154.6,495 1158,510 1170,545" fill="none" stroke="#fff" stroke-width="1.8" stroke-linejoin="round" />
<polyline points="1155,494.7 1168.5,494.7 1172.5,545" fill="none" stroke="#fff" stroke-width="1.8" stroke-linejoin="round" />
<polyline points="1175.8,605.3 1318,605.3 1325,608 1335,618.5" fill="none" stroke="#fff" stroke-width="3.5" stroke-linejoin="round" />
<polyline points="1263.5,567.8 1263.5,885" fill="none" stroke="#fff" stroke-width="2.5" stroke-linejoin="round" />
<polyline points="970,880.5 1335,880.5" fill="none" stroke="#fff" stroke-width="5" stroke-linejoin="round" />
<polyline points="957.8,740 957.8,866" fill="none" stroke="#fff" stroke-width="2" stroke-linejoin="round" />
<polyline points="984.7,740 984.7,885" fill="none" stroke="#fff" stroke-width="3" stroke-linejoin="round" />
<polyline points="1091.6,740 1091.6,885" fill="none" stroke="#fff" stroke-width="2" stroke-linejoin="round" />
</svg>
<div id="mapov" style="left:341px;top:294px;width:994px;height:591px;overflow:hidden">
<div class="t" style="left:0.0px;top:27.5px;font-size:9.4px;color:#000;text-shadow:-1px 0 #fff,1px 0 #fff,0 -1px #fff,0 1px #fff,-1px -1px #fff,1px 1px #fff,1px -1px #fff,-1px 1px #fff;">ело</div>
<div class="t" style="left:476.5px;top:55.0px;font-size:9.4px;color:#000;transform:rotate(-75.6deg);transform-origin:0 8.46px;text-shadow:-1px 0 #fff,1px 0 #fff,0 -1px #fff,0 1px #fff,-1px -1px #fff,1px 1px #fff,1px -1px #fff,-1px 1px #fff;">Ул. Челюскина</div>
<div class="t" style="left:0.0px;top:86.5px;font-size:9.4px;color:#000;text-shadow:-1px 0 #fff,1px 0 #fff,0 -1px #fff,0 1px #fff,-1px -1px #fff,1px 1px #fff,1px -1px #fff,-1px 1px #fff;">цевская</div>
<div class="t" style="left:5.8px;top:184.0px;font-size:9.4px;color:#000;transform:rotate(63deg);transform-origin:0 8.46px;text-shadow:-1px 0 #fff,1px 0 #fff,0 -1px #fff,0 1px #fff,-1px -1px #fff,1px 1px #fff,1px -1px #fff,-1px 1px #fff;">ул. Химическая</div>
<div class="t" style="left:158.5px;top:195.5px;font-size:9.4px;color:#000;transform:rotate(18.7deg);transform-origin:0 8.46px;text-shadow:-1px 0 #fff,1px 0 #fff,0 -1px #fff,0 1px #fff,-1px -1px #fff,1px 1px #fff,1px -1px #fff,-1px 1px #fff;">ул. Тэцевская</div>
<div class="t" style="left:379.5px;top:230.0px;font-size:9.4px;color:#000;transform:rotate(7.5deg);transform-origin:0 8.46px;text-shadow:-1px 0 #fff,1px 0 #fff,0 -1px #fff,0 1px #fff,-1px -1px #fff,1px 1px #fff,1px -1px #fff,-1px 1px #fff;">Ул. Тэцевская</div>
<div class="t" style="left:208.6px;top:363.5px;font-size:9.4px;color:#000;transform:rotate(-8.4deg);transform-origin:0 8.46px;text-shadow:-1px 0 #fff,1px 0 #fff,0 -1px #fff,0 1px #fff,-1px -1px #fff,1px 1px #fff,1px -1px #fff,-1px 1px #fff;">ул. Васильченко</div>
<div class="t" style="left:66.6px;top:362.5px;font-size:15px;color:#000;text-shadow:-1px 0 #fff,1px 0 #fff,0 -1px #fff,0 1px #fff,-1px -1px #fff,1px 1px #fff,1px -1px #fff,-1px 1px #fff;">Левченко</div>
<div class="t" style="left:123.0px;top:495.0px;font-size:9.4px;color:#000;transform:rotate(14.5deg);transform-origin:0 8.46px;text-shadow:-1px 0 #fff,1px 0 #fff,0 -1px #fff,0 1px #fff,-1px -1px #fff,1px 1px #fff,1px -1px #fff,-1px 1px #fff;">Горьковское ш.</div>
<div class="t" style="left:239.0px;top:501.5px;font-size:9.4px;color:#000;transform:rotate(-53deg);transform-origin:0 8.46px;text-shadow:-1px 0 #fff,1px 0 #fff,0 -1px #fff,0 1px #fff,-1px -1px #fff,1px 1px #fff,1px -1px #fff,-1px 1px #fff;">ул. Восстания</div>
<div class="t" style="left:251.0px;top:540.5px;font-size:9.4px;color:#000;transform:rotate(39.5deg);transform-origin:0 8.46px;text-shadow:-1px 0 #fff,1px 0 #fff,0 -1px #fff,0 1px #fff,-1px -1px #fff,1px 1px #fff,1px -1px #fff,-1px 1px #fff;">ул. Болотникова</div>
<div class="t" style="left:298.5px;top:544.5px;font-size:9.4px;color:#000;transform:rotate(-54deg);transform-origin:0 8.46px;text-shadow:-1px 0 #fff,1px 0 #fff,0 -1px #fff,0 1px #fff,-1px -1px #fff,1px 1px #fff,1px -1px #fff,-1px 1px #fff;">ул. Кулахметова</div>
<div class="t" style="left:375.4px;top:156.5px;font-size:15px;color:#000;text-shadow:-1px 0 #fff,1px 0 #fff,0 -1px #fff,0 1px #fff,-1px -1px #fff,1px 1px #fff,1px -1px #fff,-1px 1px #fff;">Авиастроитель</div>
<div class="t" style="left:421.0px;top:301.5px;font-size:15px;color:#000;text-shadow:-1px 0 #fff,1px 0 #fff,0 -1px #fff,0 1px #fff,-1px -1px #fff,1px 1px #fff,1px -1px #fff,-1px 1px #fff;">станция</div>
<div class="t" style="left:300.0px;top:316.2px;font-size:15px;color:#000;text-shadow:-1px 0 #fff,1px 0 #fff,0 -1px #fff,0 1px #fff,-1px -1px #fff,1px 1px #fff,1px -1px #fff,-1px 1px #fff;">Восстание-Пассажирская</div>
<div class="t" style="left:336.6px;top:357.5px;font-size:15px;color:#000;text-shadow:-1px 0 #fff,1px 0 #fff,0 -1px #fff,0 1px #fff,-1px -1px #fff,1px 1px #fff,1px -1px #fff,-1px 1px #fff;">Парк имени</div>
<div class="t" style="left:344.3px;top:372.0px;font-size:15px;color:#000;text-shadow:-1px 0 #fff,1px 0 #fff,0 -1px #fff,0 1px #fff,-1px -1px #fff,1px 1px #fff,1px -1px #fff,-1px 1px #fff;">Урицкого</div>
<div class="t" style="left:344.5px;top:445.2px;font-size:22.5px;color:#000;text-shadow:-1px 0 #fff,1px 0 #fff,0 -1px #fff,0 1px #fff,-1px -1px #fff,1px 1px #fff,1px -1px #fff,-1px 1px #fff;font-weight:bold;letter-spacing:2.7px">Казань</div>
<div class="t" style="left:431.0px;top:480.0px;font-size:15px;color:#000;text-shadow:-1px 0 #fff,1px 0 #fff,0 -1px #fff,0 1px #fff,-1px -1px #fff,1px 1px #fff,1px -1px #fff,-1px 1px #fff;">"Яшьлек"</div>
<div class="t" style="left:424.0px;top:517.0px;font-size:9.4px;color:#000;transform:rotate(28deg);transform-origin:0 8.46px;text-shadow:-1px 0 #fff,1px 0 #fff,0 -1px #fff,0 1px #fff,-1px -1px #fff,1px 1px #fff,1px -1px #fff,-1px 1px #fff;">ул. Серова</div>
<div class="t" style="left:521.0px;top:535.5px;font-size:9.4px;color:#000;transform:rotate(43.7deg);transform-origin:0 8.46px;text-shadow:-1px 0 #fff,1px 0 #fff,0 -1px #fff,0 1px #fff,-1px -1px #fff,1px 1px #fff,1px -1px #fff,-1px 1px #fff;">ул. Декабристов</div>
<div class="t" style="left:570.0px;top:509.5px;font-size:9.4px;color:#000;transform:rotate(76deg);transform-origin:0 8.46px;text-shadow:-1px 0 #fff,1px 0 #fff,0 -1px #fff,0 1px #fff,-1px -1px #fff,1px 1px #fff,1px -1px #fff,-1px 1px #fff;">пр. Ибрагимова</div>
<div class="t" style="left:562.0px;top:491.0px;font-size:9.4px;color:#000;text-shadow:-1px 0 #fff,1px 0 #fff,0 -1px #fff,0 1px #fff,-1px -1px #fff,1px 1px #fff,1px -1px #fff,-1px 1px #fff;">пр-т. Хусаина Ямашева</div>
<div class="t" style="left:799.5px;top:491.0px;font-size:9.4px;color:#000;text-shadow:-1px 0 #fff,1px 0 #fff,0 -1px #fff,0 1px #fff,-1px -1px #fff,1px 1px #fff,1px -1px #fff,-1px 1px #fff;">пр-т. Хусаина Ямашева</div>
<div class="t" style="left:614.5px;top:461.5px;font-size:15px;color:#000;text-shadow:-1px 0 #fff,1px 0 #fff,0 -1px #fff,0 1px #fff,-1px -1px #fff,1px 1px #fff,1px -1px #fff,-1px 1px #fff;">Парк Победы</div>
<div class="t" style="left:742.0px;top:445.0px;font-size:15px;color:#000;text-shadow:-1px 0 #fff,1px 0 #fff,0 -1px #fff,0 1px #fff,-1px -1px #fff,1px 1px #fff,1px -1px #fff,-1px 1px #fff;">Парк Хаус</div>
<div class="t" style="left:700.0px;top:582.0px;font-size:9.4px;color:#000;text-shadow:-1px 0 #fff,1px 0 #fff,0 -1px #fff,0 1px #fff,-1px -1px #fff,1px 1px #fff,1px -1px #fff,-1px 1px #fff;">ул. Чистопольская</div>
<div class="t" style="left:817.0px;top:582.0px;font-size:9.4px;color:#000;text-shadow:-1px 0 #fff,1px 0 #fff,0 -1px #fff,0 1px #fff,-1px -1px #fff,1px 1px #fff,1px -1px #fff,-1px 1px #fff;">ул. Чистопольская</div>
<div class="t" style="left:764.0px;top:388.0px;font-size:9.4px;color:#000;text-shadow:-1px 0 #fff,1px 0 #fff,0 -1px #fff,0 1px #fff,-1px -1px #fff,1px 1px #fff,1px -1px #fff,-1px 1px #fff;">ул. Маршала Чуйкова</div>
<div class="t" style="left:812.7px;top:230.0px;font-size:15px;color:#000;text-shadow:-1px 0 #fff,1px 0 #fff,0 -1px #fff,0 1px #fff,-1px -1px #fff,1px 1px #fff,1px -1px #fff,-1px 1px #fff;">7 Км</div>
<div class="t" style="left:845.8px;top:306.8px;font-size:9.4px;color:#000;text-shadow:-1px 0 #fff,1px 0 #fff,0 -1px #fff,0 1px #fff,-1px -1px #fff,1px 1px #fff,1px -1px #fff,-1px 1px #fff;">ул. Воровского</div>
<div class="t" style="left:829.0px;top:256.5px;font-size:9.4px;color:#000;transform:rotate(90deg);transform-origin:0 8.46px;text-shadow:-1px 0 #fff,1px 0 #fff,0 -1px #fff,0 1px #fff,-1px -1px #fff,1px 1px #fff,1px -1px #fff,-1px 1px #fff;">ул. Фатыха Амирхана</div>
<div class="t" style="left:919.0px;top:313.5px;font-size:9.4px;color:#000;transform:rotate(90deg);transform-origin:0 8.46px;text-shadow:-1px 0 #fff,1px 0 #fff,0 -1px #fff,0 1px #fff,-1px -1px #fff,1px 1px #fff,1px -1px #fff,-1px 1px #fff;">ул. Адоратского</div>
<div class="t" style="left:904.0px;top:545.0px;font-size:15px;color:#000;text-shadow:-1px 0 #fff,1px 0 #fff,0 -1px #fff,0 1px #fff,-1px -1px #fff,1px 1px #fff,1px -1px #fff,-1px 1px #fff;">Казань Арена</div>
<div class="t" style="left:985.0px;top:309.5px;font-size:9.4px;color:#000;transform:rotate(35deg);transform-origin:0 8.46px;text-shadow:-1px 0 #fff,1px 0 #fff,0 -1px #fff,0 1px #fff,-1px -1px #fff,1px 1px #fff,1px -1px #fff,-1px 1px #fff;">ул.</div>
<svg style="left:136.0px;top:364.5px" width="13" height="13" viewBox="0 0 13 13"><rect width="13" height="13" rx="2.5" fill="#0c1e3c"/><rect x="2.800" y="2.500" width="7.400" height="6.500" rx="1.200" fill="#fff"/><rect x="3.800" y="3.600" width="2.400" height="2.400" fill="#0c1e3c"/><rect x="6.800" y="3.600" width="2.400" height="2.400" fill="#0c1e3c"/><path d="M3.500 10.800 L4.500 9 M9.500 10.800 L8.500 9" stroke="#fff" stroke-width="1.100"/></svg>
<svg style="left:848.1px;top:232.0px" width="13" height="13" viewBox="0 0 13 13"><rect width="13" height="13" rx="2.5" fill="#0c1e3c"/><rect x="2.800" y="2.500" width="7.400" height="6.500" rx="1.200" fill="#fff"/><rect x="3.800" y="3.600" width="2.400" height="2.400" fill="#0c1e3c"/><rect x="6.800" y="3.600" width="2.400" height="2.400" fill="#0c1e3c"/><path d="M3.500 10.800 L4.500 9 M9.500 10.800 L8.500 9" stroke="#fff" stroke-width="1.100"/></svg>
<svg style="left:493.5px;top:482.0px" width="10" height="10" viewBox="0 0 10 10"><circle cx="5" cy="5" r="4.500" fill="#111"/><circle cx="5" cy="5" r="1.500" fill="#666"/></svg>
<svg style="left:720.5px;top:447.0px" width="18" height="17" viewBox="0 0 18 17"><path d="M0.500 0 H17.500 Q18.500 8 9 16.500 Q-0.500 8 0.500 0Z" fill="#0c1e3c"/><rect x="5.500" y="0" width="7" height="5" rx="1" fill="#fff"/><path d="M7.300 1.500 Q9 3.500 10.700 1.500" stroke="#0c1e3c" stroke-width="0.800" fill="none"/></svg>
<svg style="left:627.0px;top:441.0px" width="30" height="34" viewBox="0 0 30 34"><path d="M0 0 H28 V24 H19 L14 33 L9 24 H0Z" fill="#0e9a12"/><path d="M4 12 H13 M4 16.500 H13 M7 9 V20" stroke="#000" stroke-width="2.800"/></svg>
<svg style="left:569.8px;top:486.5px" width="20" height="25" viewBox="-1 -1 20 25"><path d="M0 0 H18 V17.500 H13 L9 22.500 L5 17.500 H0Z" fill="#0c9210" stroke="#26702a" stroke-width="1.500"/><path d="M6 14.500 V3.500 H10 Q13 3.500 13 6.500 Q13 9.500 10 9.500 H4 M4 12 H10" fill="none" stroke="#000" stroke-width="2"/></svg>
<svg style="left:876.4px;top:445.0px" width="20" height="25" viewBox="-1 -1 20 25"><path d="M0 0 H18 V17.500 H13 L9 22.500 L5 17.500 H0Z" fill="#0c9210" stroke="#26702a" stroke-width="1.500"/><path d="M6 14.500 V3.500 H10 Q13 3.500 13 6.500 Q13 9.500 10 9.500 H4 M4 12 H10" fill="none" stroke="#000" stroke-width="2"/></svg>
<svg style="left:908.8px;top:409.0px" width="20" height="25" viewBox="-1 -1 20 25"><path d="M0 0 H18 V17.500 H13 L9 22.500 L5 17.500 H0Z" fill="#0c9210" stroke="#26702a" stroke-width="1.500"/><path d="M2.500 3.500 H5 L7 10.500 H13.500 L15 5.500 H6" fill="none" stroke="#000" stroke-width="1.700"/><circle cx="7.800" cy="13.500" r="1.400" fill="#000"/><circle cx="12.800" cy="13.500" r="1.400" fill="#000"/></svg>
<svg style="left:0;top:0" width="994" height="591" viewBox="341 294 994 591">
<g transform="translate(761.9 527.3)"><path d="M-5.300 2.300 A5.800 5.800 0 1 1 5.300 2.300 Q2 5.500 0.700 9.800 L-0.700 9.800 Q-2 5.500 -5.300 2.300Z" fill="#5ed45e" stroke="#000" stroke-width="1.900" stroke-linejoin="round"/><path d="M0 9 V16.500" stroke="#000" stroke-width="1.600"/></g>
<g transform="translate(712 625)"><path d="M-5.300 2.300 A5.800 5.800 0 1 1 5.300 2.300 Q2 5.500 0.700 9.800 L-0.700 9.800 Q-2 5.500 -5.300 2.300Z" fill="#f2ee55" stroke="#000" stroke-width="1.900" stroke-linejoin="round"/><path d="M0 9 V16.500" stroke="#000" stroke-width="1.600"/></g>
<g transform="translate(740.8 622.7)"><path d="M-5.300 2.300 A5.800 5.800 0 1 1 5.300 2.300 Q2 5.500 0.700 9.800 L-0.700 9.800 Q-2 5.500 -5.300 2.300Z" fill="#f23c4c" stroke="#000" stroke-width="1.900" stroke-linejoin="round"/><path d="M0 9 V16.500" stroke="#000" stroke-width="1.600"/></g>
<g transform="translate(615 844.7)"><path d="M-5.300 2.300 A5.800 5.800 0 1 1 5.300 2.300 Q2 5.500 0.700 9.800 L-0.700 9.800 Q-2 5.500 -5.300 2.300Z" fill="#5ed45e" stroke="#000" stroke-width="1.900" stroke-linejoin="round"/><path d="M0 9 V16.500" stroke="#000" stroke-width="1.600"/></g>
<g transform="translate(714.9 707.2)"><path d="M-5.300 2.300 A5.800 5.800 0 1 1 5.300 2.300 Q2 5.500 0.700 9.800 L-0.700 9.800 Q-2 5.500 -5.300 2.300Z" fill="#f2ee55" stroke="#000" stroke-width="1.900" stroke-linejoin="round"/><path d="M0 9 V16.500" stroke="#000" stroke-width="1.600"/></g>
<g transform="translate(753.7 743.8)"><path d="M-5.300 2.300 A5.800 5.800 0 1 1 5.300 2.300 Q2 5.500 0.700 9.800 L-0.700 9.800 Q-2 5.500 -5.300 2.300Z" fill="#5ed45e" stroke="#000" stroke-width="1.900" stroke-linejoin="round"/><path d="M0 9 V16.500" stroke="#000" stroke-width="1.600"/></g>
<g transform="translate(753.7 776)"><path d="M-5.300 2.300 A5.800 5.800 0 1 1 5.300 2.300 Q2 5.500 0.700 9.800 L-0.700 9.800 Q-2 5.500 -5.300 2.300Z" fill="#f2ee55" stroke="#000" stroke-width="1.900" stroke-linejoin="round"/><path d="M0 9 V16.500" stroke="#000" stroke-width="1.600"/></g>
<g transform="translate(797 777)"><path d="M-5.300 2.300 A5.800 5.800 0 1 1 5.300 2.300 Q2 5.500 0.700 9.800 L-0.700 9.800 Q-2 5.500 -5.300 2.300Z" fill="#5ed45e" stroke="#000" stroke-width="1.900" stroke-linejoin="round"/><path d="M0 9 V16.500" stroke="#000" stroke-width="1.600"/></g>
<g transform="translate(811.8 756)"><path d="M-5.300 2.300 A5.800 5.800 0 1 1 5.300 2.300 Q2 5.500 0.700 9.800 L-0.700 9.800 Q-2 5.500 -5.300 2.300Z" fill="#5ed45e" stroke="#000" stroke-width="1.900" stroke-linejoin="round"/><path d="M0 9 V16.500" stroke="#000" stroke-width="1.600"/></g>
<g transform="translate(712 814.8)"><path d="M-5.300 2.300 A5.800 5.800 0 1 1 5.300 2.300 Q2 5.500 0.700 9.800 L-0.700 9.800 Q-2 5.500 -5.300 2.300Z" fill="#5ed45e" stroke="#000" stroke-width="1.900" stroke-linejoin="round"/><path d="M0 9 V16.500" stroke="#000" stroke-width="1.600"/></g>
<g transform="translate(711.5 838)"><path d="M-5.300 2.300 A5.800 5.800 0 1 1 5.300 2.300 Q2 5.500 0.700 9.800 L-0.700 9.800 Q-2 5.500 -5.300 2.300Z" fill="#5ed45e" stroke="#000" stroke-width="1.900" stroke-linejoin="round"/><path d="M0 9 V16.500" stroke="#000" stroke-width="1.600"/></g>
<g transform="translate(718.6 840.3)"><path d="M-5.300 2.300 A5.800 5.800 0 1 1 5.300 2.300 Q2 5.500 0.700 9.800 L-0.700 9.800 Q-2 5.500 -5.300 2.300Z" fill="#5ed45e" stroke="#000" stroke-width="1.900" stroke-linejoin="round"/><path d="M0 9 V16.500" stroke="#000" stroke-width="1.600"/></g>
<g transform="translate(813.6 816)"><path d="M-5.300 2.300 A5.800 5.800 0 1 1 5.300 2.300 Q2 5.500 0.700 9.800 L-0.700 9.800 Q-2 5.500 -5.300 2.300Z" fill="#5ed45e" stroke="#000" stroke-width="1.900" stroke-linejoin="round"/><path d="M0 9 V16.500" stroke="#000" stroke-width="1.600"/></g>
<g transform="translate(1195.6 582)"><path d="M-5.300 2.300 A5.800 5.800 0 1 1 5.300 2.300 Q2 5.500 0.700 9.800 L-0.700 9.800 Q-2 5.500 -5.300 2.300Z" fill="#5ed45e" stroke="#000" stroke-width="1.900" stroke-linejoin="round"/><path d="M0 9 V16.500" stroke="#000" stroke-width="1.600"/></g>
<g transform="translate(1158 595.4)"><path d="M-5.300 2.300 A5.800 5.800 0 1 1 5.300 2.300 Q2 5.500 0.700 9.800 L-0.700 9.800 Q-2 5.500 -5.300 2.300Z" fill="#5ed45e" stroke="#000" stroke-width="1.900" stroke-linejoin="round"/><path d="M0 9 V16.500" stroke="#000" stroke-width="1.600"/></g>
<g transform="translate(1190.8 625)"><path d="M-5.300 2.300 A5.800 5.800 0 1 1 5.300 2.300 Q2 5.500 0.700 9.800 L-0.700 9.800 Q-2 5.500 -5.300 2.300Z" fill="#5ed45e" stroke="#000" stroke-width="1.900" stroke-linejoin="round"/><path d="M0 9 V16.500" stroke="#000" stroke-width="1.600"/></g>
<g transform="translate(1190.8 639.5)"><path d="M-5.300 2.300 A5.800 5.800 0 1 1 5.300 2.300 Q2 5.500 0.700 9.800 L-0.700 9.800 Q-2 5.500 -5.300 2.300Z" fill="#5ed45e" stroke="#000" stroke-width="1.900" stroke-linejoin="round"/><path d="M0 9 V16.500" stroke="#000" stroke-width="1.600"/></g>
<g transform="translate(1189.7 647)"><path d="M-5.300 2.300 A5.800 5.800 0 1 1 5.300 2.300 Q2 5.500 0.700 9.800 L-0.700 9.800 Q-2 5.500 -5.300 2.300Z" fill="#5ed45e" stroke="#000" stroke-width="1.900" stroke-linejoin="round"/><path d="M0 9 V16.500" stroke="#000" stroke-width="1.600"/></g>
<g transform="translate(1192.8 662.6)"><path d="M-5.300 2.300 A5.800 5.800 0 1 1 5.300 2.300 Q2 5.500 0.700 9.800 L-0.700 9.800 Q-2 5.500 -5.300 2.300Z" fill="#5ed45e" stroke="#000" stroke-width="1.900" stroke-linejoin="round"/><path d="M0 9 V16.500" stroke="#000" stroke-width="1.600"/></g>
<g transform="translate(1240.8 637)"><path d="M-5.300 2.300 A5.800 5.800 0 1 1 5.300 2.300 Q2 5.500 0.700 9.800 L-0.700 9.800 Q-2 5.500 -5.300 2.300Z" fill="#5ed45e" stroke="#000" stroke-width="1.900" stroke-linejoin="round"/><path d="M0 9 V16.500" stroke="#000" stroke-width="1.600"/></g>
<g transform="translate(1282.7 593)"><path d="M-5.300 2.300 A5.800 5.800 0 1 1 5.300 2.300 Q2 5.500 0.700 9.800 L-0.700 9.800 Q-2 5.500 -5.300 2.300Z" fill="#f23c4c" stroke="#000" stroke-width="1.900" stroke-linejoin="round"/><path d="M0 9 V16.500" stroke="#000" stroke-width="1.600"/></g>
<g transform="translate(1313.6 675.8)"><path d="M-5.300 2.300 A5.800 5.800 0 1 1 5.300 2.300 Q2 5.500 0.700 9.800 L-0.700 9.800 Q-2 5.500 -5.300 2.300Z" fill="#f2ee55" stroke="#000" stroke-width="1.900" stroke-linejoin="round"/><path d="M0 9 V16.500" stroke="#000" stroke-width="1.600"/></g>
<g transform="translate(1180 699.3)"><path d="M-5.300 2.300 A5.800 5.800 0 1 1 5.300 2.300 Q2 5.500 0.700 9.800 L-0.700 9.800 Q-2 5.500 -5.300 2.300Z" fill="#5ed45e" stroke="#000" stroke-width="1.900" stroke-linejoin="round"/><path d="M0 9 V16.500" stroke="#000" stroke-width="1.600"/></g>
<g transform="translate(1192 699.3)"><path d="M-5.300 2.300 A5.800 5.800 0 1 1 5.300 2.300 Q2 5.500 0.700 9.800 L-0.700 9.800 Q-2 5.500 -5.300 2.300Z" fill="#5ed45e" stroke="#000" stroke-width="1.900" stroke-linejoin="round"/><path d="M0 9 V16.500" stroke="#000" stroke-width="1.600"/></g>
<g transform="translate(1185 701.5)"><path d="M-5.300 2.300 A5.800 5.800 0 1 1 5.300 2.300 Q2 5.500 0.700 9.800 L-0.700 9.800 Q-2 5.500 -5.300 2.300Z" fill="#5ed45e" stroke="#000" stroke-width="1.900" stroke-linejoin="round"/><path d="M0 9 V16.500" stroke="#000" stroke-width="1.600"/></g>
<g transform="translate(1190.8 708)"><path d="M-5.300 2.300 A5.800 5.800 0 1 1 5.300 2.300 Q2 5.500 0.700 9.800 L-0.700 9.800 Q-2 5.500 -5.300 2.300Z" fill="#5ed45e" stroke="#000" stroke-width="1.900" stroke-linejoin="round"/><path d="M0 9 V16.500" stroke="#000" stroke-width="1.600"/></g>
<g transform="translate(1275 712.6)"><path d="M-5.300 2.300 A5.800 5.800 0 1 1 5.300 2.300 Q2 5.500 0.700 9.800 L-0.700 9.800 Q-2 5.500 -5.300 2.300Z" fill="#f23c4c" stroke="#000" stroke-width="1.900" stroke-linejoin="round"/><path d="M0 9 V16.500" stroke="#000" stroke-width="1.600"/></g>
<g transform="translate(1306 701.5)"><path d="M-5.300 2.300 A5.800 5.800 0 1 1 5.300 2.300 Q2 5.500 0.700 9.800 L-0.700 9.800 Q-2 5.500 -5.300 2.300Z" fill="#5ed45e" stroke="#000" stroke-width="1.900" stroke-linejoin="round"/><path d="M0 9 V16.500" stroke="#000" stroke-width="1.600"/></g>
<g transform="translate(1294.9 734.6)"><path d="M-5.300 2.300 A5.800 5.800 0 1 1 5.300 2.300 Q2 5.500 0.700 9.800 L-0.700 9.800 Q-2 5.500 -5.300 2.300Z" fill="#f2ee55" stroke="#000" stroke-width="1.900" stroke-linejoin="round"/><path d="M0 9 V16.500" stroke="#000" stroke-width="1.600"/></g>
<g transform="translate(1288.7 742.8)"><path d="M-5.300 2.300 A5.800 5.800 0 1 1 5.300 2.300 Q2 5.500 0.700 9.800 L-0.700 9.800 Q-2 5.500 -5.300 2.300Z" fill="#f2ee55" stroke="#000" stroke-width="1.900" stroke-linejoin="round"/><path d="M0 9 V16.500" stroke="#000" stroke-width="1.600"/></g>
<g transform="translate(1294.9 761)"><path d="M-5.300 2.300 A5.800 5.800 0 1 1 5.300 2.300 Q2 5.500 0.700 9.800 L-0.700 9.800 Q-2 5.500 -5.300 2.300Z" fill="#5ed45e" stroke="#000" stroke-width="1.900" stroke-linejoin="round"/><path d="M0 9 V16.500" stroke="#000" stroke-width="1.600"/></g>
<g transform="translate(1302 764.4)"><path d="M-5.300 2.300 A5.800 5.800 0 1 1 5.300 2.300 Q2 5.500 0.700 9.800 L-0.700 9.800 Q-2 5.500 -5.300 2.300Z" fill="#f2ee55" stroke="#000" stroke-width="1.900" stroke-linejoin="round"/><path d="M0 9 V16.500" stroke="#000" stroke-width="1.600"/></g>
<g transform="translate(1188.6 753.4)"><path d="M-5.300 2.300 A5.800 5.800 0 1 1 5.300 2.300 Q2 5.500 0.700 9.800 L-0.700 9.800 Q-2 5.500 -5.300 2.300Z" fill="#5ed45e" stroke="#000" stroke-width="1.900" stroke-linejoin="round"/><path d="M0 9 V16.500" stroke="#000" stroke-width="1.600"/></g>
<g transform="translate(1199 753.4)"><path d="M-5.300 2.300 A5.800 5.800 0 1 1 5.300 2.300 Q2 5.500 0.700 9.800 L-0.700 9.800 Q-2 5.500 -5.300 2.300Z" fill="#f2ee55" stroke="#000" stroke-width="1.900" stroke-linejoin="round"/><path d="M0 9 V16.500" stroke="#000" stroke-width="1.600"/></g>
<g transform="translate(1196 770)"><path d="M-5.300 2.300 A5.800 5.800 0 1 1 5.300 2.300 Q2 5.500 0.700 9.800 L-0.700 9.800 Q-2 5.500 -5.300 2.300Z" fill="#f23c4c" stroke="#000" stroke-width="1.900" stroke-linejoin="round"/><path d="M0 9 V16.500" stroke="#000" stroke-width="1.600"/></g>
<g transform="translate(1232 786.4)"><path d="M-5.300 2.300 A5.800 5.800 0 1 1 5.300 2.300 Q2 5.500 0.700 9.800 L-0.700 9.800 Q-2 5.500 -5.300 2.300Z" fill="#f2ee55" stroke="#000" stroke-width="1.900" stroke-linejoin="round"/><path d="M0 9 V16.500" stroke="#000" stroke-width="1.600"/></g>
<g transform="translate(1206 794.8)"><path d="M-5.300 2.300 A5.800 5.800 0 1 1 5.300 2.300 Q2 5.500 0.700 9.800 L-0.700 9.800 Q-2 5.500 -5.300 2.300Z" fill="#f2ee55" stroke="#000" stroke-width="1.900" stroke-linejoin="round"/><path d="M0 9 V16.500" stroke="#000" stroke-width="1.600"/></g>
<g transform="translate(1206.7 808.5)"><path d="M-5.300 2.300 A5.800 5.800 0 1 1 5.300 2.300 Q2 5.500 0.700 9.800 L-0.700 9.800 Q-2 5.500 -5.300 2.300Z" fill="#5ed45e" stroke="#000" stroke-width="1.900" stroke-linejoin="round"/><path d="M0 9 V16.500" stroke="#000" stroke-width="1.600"/></g>
<g transform="translate(1260.7 796.4)"><path d="M-5.300 2.300 A5.800 5.800 0 1 1 5.300 2.300 Q2 5.500 0.700 9.800 L-0.700 9.800 Q-2 5.500 -5.300 2.300Z" fill="#5ed45e" stroke="#000" stroke-width="1.900" stroke-linejoin="round"/><path d="M0 9 V16.500" stroke="#000" stroke-width="1.600"/></g>
<g transform="translate(1270 799.7)"><path d="M-5.300 2.300 A5.800 5.800 0 1 1 5.300 2.300 Q2 5.500 0.700 9.800 L-0.700 9.800 Q-2 5.500 -5.300 2.300Z" fill="#5ed45e" stroke="#000" stroke-width="1.900" stroke-linejoin="round"/><path d="M0 9 V16.500" stroke="#000" stroke-width="1.600"/></g>
<g transform="translate(1258.5 809.6)"><path d="M-5.300 2.300 A5.800 5.800 0 1 1 5.300 2.300 Q2 5.500 0.700 9.800 L-0.700 9.800 Q-2 5.500 -5.300 2.300Z" fill="#5ed45e" stroke="#000" stroke-width="1.900" stroke-linejoin="round"/><path d="M0 9 V16.500" stroke="#000" stroke-width="1.600"/></g>
<g transform="translate(1260 825)"><path d="M-5.300 2.300 A5.800 5.800 0 1 1 5.300 2.300 Q2 5.500 0.700 9.800 L-0.700 9.800 Q-2 5.500 -5.300 2.300Z" fill="#f2ee55" stroke="#000" stroke-width="1.900" stroke-linejoin="round"/><path d="M0 9 V16.500" stroke="#000" stroke-width="1.600"/></g>
<g transform="translate(1261.5 827)"><path d="M-5.300 2.300 A5.800 5.800 0 1 1 5.300 2.300 Q2 5.500 0.700 9.800 L-0.700 9.800 Q-2 5.500 -5.300 2.300Z" fill="#f23c4c" stroke="#000" stroke-width="1.900" stroke-linejoin="round"/><path d="M0 9 V16.500" stroke="#000" stroke-width="1.600"/></g>
<g transform="translate(1260 830.5)"><path d="M-5.300 2.300 A5.800 5.800 0 1 1 5.300 2.300 Q2 5.500 0.700 9.800 L-0.700 9.800 Q-2 5.500 -5.300 2.300Z" fill="#5ed45e" stroke="#000" stroke-width="1.900" stroke-linejoin="round"/><path d="M0 9 V16.500" stroke="#000" stroke-width="1.600"/></g>
<g transform="translate(1255 835)"><path d="M-5.300 2.300 A5.800 5.800 0 1 1 5.300 2.300 Q2 5.500 0.700 9.800 L-0.700 9.800 Q-2 5.500 -5.300 2.300Z" fill="#5ed45e" stroke="#000" stroke-width="1.900" stroke-linejoin="round"/><path d="M0 9 V16.500" stroke="#000" stroke-width="1.600"/></g>
<g transform="translate(1292 826)"><path d="M-5.300 2.300 A5.800 5.800 0 1 1 5.300 2.300 Q2 5.500 0.700 9.800 L-0.700 9.800 Q-2 5.500 -5.300 2.300Z" fill="#5ed45e" stroke="#000" stroke-width="1.900" stroke-linejoin="round"/><path d="M0 9 V16.500" stroke="#000" stroke-width="1.600"/></g>
<g transform="translate(1296 838)"><path d="M-5.300 2.300 A5.800 5.800 0 1 1 5.300 2.300 Q2 5.500 0.700 9.800 L-0.700 9.800 Q-2 5.500 -5.300 2.300Z" fill="#5ed45e" stroke="#000" stroke-width="1.900" stroke-linejoin="round"/><path d="M0 9 V16.500" stroke="#000" stroke-width="1.600"/></g>
<g transform="translate(1282.7 839.4)"><path d="M-5.300 2.300 A5.800 5.800 0 1 1 5.300 2.300 Q2 5.500 0.700 9.800 L-0.700 9.800 Q-2 5.500 -5.300 2.300Z" fill="#f2ee55" stroke="#000" stroke-width="1.900" stroke-linejoin="round"/><path d="M0 9 V16.500" stroke="#000" stroke-width="1.600"/></g>
<g transform="translate(1285 861.4)"><path d="M-5.300 2.300 A5.800 5.800 0 1 1 5.300 2.300 Q2 5.500 0.700 9.800 L-0.700 9.800 Q-2 5.500 -5.300 2.300Z" fill="#f2ee55" stroke="#000" stroke-width="1.900" stroke-linejoin="round"/><path d="M0 9 V16.500" stroke="#000" stroke-width="1.600"/></g>
<g transform="translate(1246.8 857)"><path d="M-5.300 2.300 A5.800 5.800 0 1 1 5.300 2.300 Q2 5.500 0.700 9.800 L-0.700 9.800 Q-2 5.500 -5.300 2.300Z" fill="#5ed45e" stroke="#000" stroke-width="1.900" stroke-linejoin="round"/><path d="M0 9 V16.500" stroke="#000" stroke-width="1.600"/></g>
<g transform="translate(1168 839)"><path d="M-5.300 2.300 A5.800 5.800 0 1 1 5.300 2.300 Q2 5.500 0.700 9.800 L-0.700 9.800 Q-2 5.500 -5.300 2.300Z" fill="#5ed45e" stroke="#000" stroke-width="1.900" stroke-linejoin="round"/><path d="M0 9 V16.500" stroke="#000" stroke-width="1.600"/></g>
<g transform="translate(1147 850.4)"><path d="M-5.300 2.300 A5.800 5.800 0 1 1 5.300 2.300 Q2 5.500 0.700 9.800 L-0.700 9.800 Q-2 5.500 -5.300 2.300Z" fill="#5ed45e" stroke="#000" stroke-width="1.900" stroke-linejoin="round"/><path d="M0 9 V16.500" stroke="#000" stroke-width="1.600"/></g>
<g transform="translate(1212 880)"><path d="M-5.300 2.300 A5.800 5.800 0 1 1 5.300 2.300 Q2 5.500 0.700 9.800 L-0.700 9.800 Q-2 5.500 -5.300 2.300Z" fill="#5ed45e" stroke="#000" stroke-width="1.900" stroke-linejoin="round"/><path d="M0 9 V16.500" stroke="#000" stroke-width="1.600"/></g>
<g transform="translate(1231 882.4)"><path d="M-5.300 2.300 A5.800 5.800 0 1 1 5.300 2.300 Q2 5.500 0.700 9.800 L-0.700 9.800 Q-2 5.500 -5.300 2.300Z" fill="#5ed45e" stroke="#000" stroke-width="1.900" stroke-linejoin="round"/><path d="M0 9 V16.500" stroke="#000" stroke-width="1.600"/></g>
<g transform="translate(1335 725.8)"><path d="M-5.300 2.300 A5.800 5.800 0 1 1 5.300 2.300 Q2 5.500 0.700 9.800 L-0.700 9.800 Q-2 5.500 -5.300 2.300Z" fill="#5ed45e" stroke="#000" stroke-width="1.900" stroke-linejoin="round"/><path d="M0 9 V16.500" stroke="#000" stroke-width="1.600"/></g>
<g transform="translate(1335 745.6)"><path d="M-5.300 2.300 A5.800 5.800 0 1 1 5.300 2.300 Q2 5.500 0.700 9.800 L-0.700 9.800 Q-2 5.500 -5.300 2.300Z" fill="#5ed45e" stroke="#000" stroke-width="1.900" stroke-linejoin="round"/><path d="M0 9 V16.500" stroke="#000" stroke-width="1.600"/></g>
<g transform="translate(974.7 780.5)"><path d="M-5.300 2.300 A5.800 5.800 0 1 1 5.300 2.300 Q2 5.500 0.700 9.800 L-0.700 9.800 Q-2 5.500 -5.300 2.300Z" fill="#5ed45e" stroke="#000" stroke-width="1.900" stroke-linejoin="round"/><path d="M0 9 V16.500" stroke="#000" stroke-width="1.600"/></g>
<g transform="translate(1033.8 794.3)"><path d="M-5.300 2.300 A5.800 5.800 0 1 1 5.300 2.300 Q2 5.500 0.700 9.800 L-0.700 9.800 Q-2 5.500 -5.300 2.300Z" fill="#5ed45e" stroke="#000" stroke-width="1.900" stroke-linejoin="round"/><path d="M0 9 V16.500" stroke="#000" stroke-width="1.600"/></g>
<g transform="translate(988.5 822)"><path d="M-5.300 2.300 A5.800 5.800 0 1 1 5.300 2.300 Q2 5.500 0.700 9.800 L-0.700 9.800 Q-2 5.500 -5.300 2.300Z" fill="#f2ee55" stroke="#000" stroke-width="1.900" stroke-linejoin="round"/><path d="M0 9 V16.500" stroke="#000" stroke-width="1.600"/></g>
<g transform="translate(1029.5 830.8)"><path d="M-5.300 2.300 A5.800 5.800 0 1 1 5.300 2.300 Q2 5.500 0.700 9.800 L-0.700 9.800 Q-2 5.500 -5.300 2.300Z" fill="#5ed45e" stroke="#000" stroke-width="1.900" stroke-linejoin="round"/><path d="M0 9 V16.500" stroke="#000" stroke-width="1.600"/></g>
<g transform="translate(1048.9 842)"><path d="M-5.300 2.300 A5.800 5.800 0 1 1 5.300 2.300 Q2 5.500 0.700 9.800 L-0.700 9.800 Q-2 5.500 -5.300 2.300Z" fill="#5ed45e" stroke="#000" stroke-width="1.900" stroke-linejoin="round"/><path d="M0 9 V16.500" stroke="#000" stroke-width="1.600"/></g>
<g transform="translate(1055 853.4)"><path d="M-5.300 2.300 A5.800 5.800 0 1 1 5.300 2.300 Q2 5.500 0.700 9.800 L-0.700 9.800 Q-2 5.500 -5.300 2.300Z" fill="#5ed45e" stroke="#000" stroke-width="1.900" stroke-linejoin="round"/><path d="M0 9 V16.500" stroke="#000" stroke-width="1.600"/></g>
<g transform="translate(1037.6 859.7)"><path d="M-5.300 2.300 A5.800 5.800 0 1 1 5.300 2.300 Q2 5.500 0.700 9.800 L-0.700 9.800 Q-2 5.500 -5.300 2.300Z" fill="#f2ee55" stroke="#000" stroke-width="1.900" stroke-linejoin="round"/><path d="M0 9 V16.500" stroke="#000" stroke-width="1.600"/></g>
<g transform="translate(1050.9 872.3)"><path d="M-5.300 2.300 A5.800 5.800 0 1 1 5.300 2.300 Q2 5.500 0.700 9.800 L-0.700 9.800 Q-2 5.500 -5.300 2.300Z" fill="#5ed45e" stroke="#000" stroke-width="1.900" stroke-linejoin="round"/><path d="M0 9 V16.500" stroke="#000" stroke-width="1.600"/></g>
<g transform="translate(1057.7 881)"><path d="M-5.300 2.300 A5.800 5.800 0 1 1 5.300 2.300 Q2 5.500 0.700 9.800 L-0.700 9.800 Q-2 5.500 -5.300 2.300Z" fill="#f2ee55" stroke="#000" stroke-width="1.900" stroke-linejoin="round"/><path d="M0 9 V16.500" stroke="#000" stroke-width="1.600"/></g>
<g transform="translate(1062 882.3)"><path d="M-5.300 2.300 A5.800 5.800 0 1 1 5.300 2.300 Q2 5.500 0.700 9.800 L-0.700 9.800 Q-2 5.500 -5.300 2.300Z" fill="#f2ee55" stroke="#000" stroke-width="1.900" stroke-linejoin="round"/><path d="M0 9 V16.500" stroke="#000" stroke-width="1.600"/></g>
<g transform="translate(1133.9 813.2)"><path d="M-5.300 2.300 A5.800 5.800 0 1 1 5.300 2.300 Q2 5.500 0.700 9.800 L-0.700 9.800 Q-2 5.500 -5.300 2.300Z" fill="#f2ee55" stroke="#000" stroke-width="1.900" stroke-linejoin="round"/><path d="M0 9 V16.500" stroke="#000" stroke-width="1.600"/></g>
<g transform="translate(1108 851)"><path d="M-5.300 2.300 A5.800 5.800 0 1 1 5.300 2.300 Q2 5.500 0.700 9.800 L-0.700 9.800 Q-2 5.500 -5.300 2.300Z" fill="#f2ee55" stroke="#000" stroke-width="1.900" stroke-linejoin="round"/><path d="M0 9 V16.500" stroke="#000" stroke-width="1.600"/></g>
<g transform="translate(924.4 858.5)"><path d="M-5.300 2.300 A5.800 5.800 0 1 1 5.300 2.300 Q2 5.500 0.700 9.800 L-0.700 9.800 Q-2 5.500 -5.300 2.300Z" fill="#5ed45e" stroke="#000" stroke-width="1.900" stroke-linejoin="round"/><path d="M0 9 V16.500" stroke="#000" stroke-width="1.600"/></g>
<g transform="translate(818.5 717)"><path d="M-5.300 2.300 A5.800 5.800 0 1 1 5.300 2.300 Q2 5.500 0.700 9.800 L-0.700 9.800 Q-2 5.500 -5.300 2.300Z" fill="#5ed45e" stroke="#000" stroke-width="1.900" stroke-linejoin="round"/><path d="M0 9 V16.500" stroke="#000" stroke-width="1.600"/></g>
</svg>
</div>
<div class="mc" style="left:352px;top:305px;width:135px;height:42px"></div>
<div class="t" style="left:371px;top:315px;font-size:21px;color:#000">Карта</div>
<div style="left:473px;top:324px;width:0;height:0;border-left:4.500px solid transparent;border-right:4.500px solid transparent;border-top:4.500px solid #777"></div>
<div class="mc" style="left:504px;top:305px;width:258px;height:42px"></div>
<svg style="left:512px;top:309px" width="16" height="25" viewBox="-8 -8 16 25"><path d="M-5.300 2.300 A5.800 5.800 0 1 1 5.300 2.300 Q2 5.500 0.700 9.800 L-0.700 9.800 Q-2 5.500 -5.300 2.300Z" fill="#5555fa" stroke="#000" stroke-width="1.900" stroke-linejoin="round"/><path d="M0 9 V16" stroke="#000" stroke-width="1.600"/></svg>
<div class="t" style="left:538px;top:314px;font-size:13.500px;font-weight:bold;color:#000">Объектов на карте: 290 (Казань)</div>
<div class="mc" style="left:1278px;top:305px;width:45px;height:45px"></div>
<svg style="left:1288px;top:309px" width="25" height="36" viewBox="0 0 25 36"><circle cx="12.500" cy="7.500" r="6" fill="#f5b120" stroke="#c98a10" stroke-width="0.800"/><path d="M6.500 14 H18.500 Q20.500 14 21 17 L22 25.500 Q21 27 19.500 25.500 L18.500 21 L17.500 34 H13.200 L12.500 26 L11.800 34 H7.500 L6.500 21 L5.500 25.500 Q4 27 3 25.500 L4 17 Q4.500 14 6.500 14Z" fill="#f5b120" stroke="#c98a10" stroke-width="0.800"/><path d="M8.500 14.300 L12.500 20 L16.500 14.300Z" fill="#d9742a"/></svg>
<div class="mc" style="left:1278px;top:386px;width:45px;height:91px"></div>
<div style="left:1284px;top:431px;width:33px;height:1px;background:#e6e6e6"></div>
<div style="left:1291px;top:406.300px;width:20px;height:3.500px;background:#666"></div><div style="left:1299.300px;top:398px;width:3.500px;height:20px;background:#666"></div>
<div style="left:1291px;top:452.800px;width:20px;height:3.500px;background:#666"></div>
<div class="mc" style="left:1278px;top:500px;width:45px;height:45px"></div>
<svg style="left:1291px;top:512px" width="20" height="20" viewBox="0 0 20 20"><path d="M1 6 V1 H6 M14 1 H19 V6 M19 14 V19 H14 M6 19 H1 V14" fill="none" stroke="#666" stroke-width="2.400"/></svg>
<div class="t" style="left:349px;top:877px;font-size:21px;font-weight:bold;color:#fff;letter-spacing:-0.5px;height:8px;overflow:hidden;text-shadow:0 0 2px #666,0 0 1px #666">Google</div>
<div style="left:821px;top:309px;width:333px;height:431px;background:#fff;border-radius:8px;box-shadow:0 2px 7px 1px rgba(0,0,0,.3)"></div>
<svg style="left:975px;top:739px" width="24" height="15" viewBox="0 0 24 15"><path d="M0 0 H24 L12 14.500Z" fill="#fff"/></svg>
<svg style="left:1138px;top:313px" width="12" height="12" viewBox="0 0 12 12"><path d="M1.500 1.500 L10.500 10.500 M10.500 1.500 L1.500 10.500" stroke="#555" stroke-width="1.300"/></svg>
<svg style="left:834px;top:323px" width="18" height="18" viewBox="0 0 14 14"><g transform="rotate(-45 7 7)" fill="none" stroke="#333" stroke-width="1.500"><rect x="0" y="4.600" width="7.800" height="4.800" rx="2.400"/><rect x="6.200" y="4.600" width="7.800" height="4.800" rx="2.400"/></g></svg>
<div class="t" style="left:860px;top:323px;font-size:16px;color:#111;font-weight:normal;-webkit-text-stroke:0.35px #111">Канал измерительного прибора</div>
<div style="left:835px;top:349px;width:298px;height:2px;background:#d0d0d0"></div>
<div class="t pl" style="top:365px">Канал:</div>
<div class="t pl" style="top:381px">Ресурсная система:</div>
<div class="t pl" style="top:397px">Статусы прибора:</div>
<div class="t pl" style="top:425px">Статусы точки доступа:</div>
<div class="t pl" style="top:453px">Время измерения:</div>
<div class="t pv" style="top:365px">VKT7-118570 / ЦО</div>
<div class="t pv" style="top:381px">ЦО</div>
<div class="t pv" style="top:453px;font-weight:normal;color:#444">31.10.2019 <span class="i" style="font-weight:bold;color:#111">14:12:31</span></div>
<div class="sq" style="left:993.7px;top:397.3px;background:#0072c6"></div>
<div class="sq" style="left:1007.5px;top:397.3px;background:#0072c6"></div>
<div class="sq" style="left:1021.3px;top:397.3px;background:#0072c6"></div>
<div class="sq" style="left:1035.1px;top:397.3px;background:#0072c6"></div>
<div class="sq" style="left:1048.9px;top:397.3px;background:#0072c6"></div>
<div class="sq" style="left:1062.7px;top:397.3px;background:#0072c6"></div>
<div class="sq" style="left:1076.5px;top:397.3px;background:#0072c6"></div>
<div class="sq" style="left:1090.3px;top:397.3px;background:#0072c6"></div>
<div class="sq" style="left:1104.1px;top:397.3px;background:#0072c6"></div>
<div class="sq" style="left:1117.9px;top:397.3px;background:#0072c6"></div>
<div class="sq" style="left:993.7px;top:410.5px;background:#0072c6"></div>
<div class="sq" style="left:1007.5px;top:410.5px;background:#0072c6"></div>
<div class="sq" style="left:1021.3px;top:410.5px;background:#0072c6"></div>
<div class="sq" style="left:1035.1px;top:410.5px;background:#0072c6"></div>
<div class="sq" style="left:1048.9px;top:410.5px;background:#0072c6"></div>
<div class="sq" style="left:1062.7px;top:410.5px;background:#0072c6"></div>
<div class="sq" style="left:1076.5px;top:410.5px;background:#0072c6"></div>
<div class="sq" style="left:1090.3px;top:410.5px;background:#0072c6"></div>
<div class="sq" style="left:1104.1px;top:410.5px;background:#472f92"></div>
<div class="sq" style="left:1117.9px;top:410.5px;background:#0072c6"></div>
<div class="sq" style="left:993.7px;top:425.0px;background:#0072c6"></div>
<div class="sq" style="left:1007.5px;top:425.0px;background:#0072c6"></div>
<div class="sq" style="left:1021.3px;top:425.0px;background:#0072c6"></div>
<div class="sq" style="left:1035.1px;top:425.0px;background:#0072c6"></div>
<div class="sq" style="left:1048.9px;top:425.0px;background:#0072c6"></div>
<div class="sq" style="left:1062.7px;top:425.0px;background:#0072c6"></div>
<div class="sq" style="left:1076.5px;top:425.0px;background:#0072c6"></div>
<div class="sq" style="left:1090.3px;top:425.0px;background:#0072c6"></div>
<div class="sq" style="left:1104.1px;top:425.0px;background:#0072c6"></div>
<div class="sq" style="left:1117.9px;top:425.0px;background:#0072c6"></div>
<div class="sq" style="left:993.7px;top:438.3px;background:#0072c6"></div>
<div class="sq" style="left:1007.5px;top:438.3px;background:#0072c6"></div>
<div class="sq" style="left:1021.3px;top:438.3px;background:#0072c6"></div>
<div class="sq" style="left:1035.1px;top:438.3px;background:#0072c6"></div>
<div class="sq" style="left:1048.9px;top:438.3px;background:#0072c6"></div>
<div class="sq" style="left:1062.7px;top:438.3px;background:#0072c6"></div>
<div class="sq" style="left:1076.5px;top:438.3px;background:#0072c6"></div>
<div class="sq" style="left:1090.3px;top:438.3px;background:#0072c6"></div>
<div class="sq" style="left:1104.1px;top:438.3px;background:#0072c6"></div>
<div class="sq" style="left:1117.9px;top:438.3px;background:#0072c6"></div>
<div style="left:835px;top:467px;width:299px;height:225px;border:1px solid #ddd;background:#fff"></div>
<div style="left:836px;top:468px;width:297px;height:30px;background:#f6f6f6"></div>
<div style="left:836px;top:498px;width:297px;height:1px;background:#ddd"></div>
<div style="left:836px;top:499px;width:297px;height:66px;background:#ececec"></div><div style="left:839.500px;top:499px;width:291px;height:66px;background:#e1e1e1"></div>
<div style="left:836px;top:565px;width:297px;height:31px;background:#f6f6f6;border-top:1px solid #ddd;border-bottom:1px solid #ddd"></div>
<div style="left:836px;top:660px;width:297px;height:1px;background:#ddd"></div>
<svg style="left:949.500px;top:474px" width="17" height="20" viewBox="0 0 17 20"><path d="M7.800 0 C8.500 3 12 5.500 13 8 C13.800 7.200 14 6 13.800 5 C16 7.500 17 10.500 16.500 13.500 C16 17.500 12.500 20 8.500 20 C4 20 0.500 17.500 0.200 13.500 C0 10.500 1.500 8.500 3 7 C3 8.500 3.500 10 4.500 10.800 C4.200 7 5.500 3 7.800 0Z M8.800 11 C9.500 13 11.500 14.500 11.200 16.800 C11 18.800 9.800 19.800 8.500 19.800 C7 19.800 5.600 18.800 5.600 16.800 C5.600 14.800 8 13.500 8.800 11Z" fill="#444" fill-rule="evenodd"/></svg>
<div class="t" style="left:973px;top:479px;font-size:12.500px;font-weight:bold;color:#333">Энергия</div>
<svg style="left:847.300px;top:506px" width="17" height="20" viewBox="0 0 17 20"><path d="M7.800 0 C8.500 3 12 5.500 13 8 C13.800 7.200 14 6 13.800 5 C16 7.500 17 10.500 16.500 13.500 C16 17.500 12.500 20 8.500 20 C4 20 0.500 17.500 0.200 13.500 C0 10.500 1.500 8.500 3 7 C3 8.500 3.500 10 4.500 10.800 C4.200 7 5.500 3 7.800 0Z M8.800 11 C9.500 13 11.500 14.500 11.200 16.800 C11 18.800 9.800 19.800 8.500 19.800 C7 19.800 5.600 18.800 5.600 16.800 C5.600 14.800 8 13.500 8.800 11Z" fill="#444" fill-rule="evenodd"/></svg>
<div class="t" style="left:871px;top:511px;font-size:11.500px;color:#444;letter-spacing:0.3px">Тепловая энергия полная</div>
<div style="left:846px;top:541.200px;width:10.500px;height:1.400px;background:#333"></div><div style="left:846px;top:545.800px;width:10.500px;height:1.400px;background:#333"></div>
<div class="t" style="left:870.500px;top:538.5px;font-size:14px;color:#606060;font-family:'Liberation Mono',monospace;font-style:italic;letter-spacing:0.1px;font-weight:normal">198.23<span class="i" style="font-family:'Liberation Sans',sans-serif;font-style:normal;letter-spacing:0.2px;font-size:13.500px;color:#444;margin-left:3px">Гкал</span></div>
<svg style="left:957px;top:571px" width="16" height="19" viewBox="0 0 16 19"><circle cx="8" cy="3.300" r="2.300" fill="none" stroke="#444" stroke-width="1.500"/><path d="M4 6 H12 Q13.300 6 13.600 7.500 L15.500 16.500 Q15.700 18 14 18 H2 Q0.300 18 0.500 16.500 L2.400 7.500 Q2.700 6 4 6Z" fill="#444"/><circle cx="8" cy="12" r="3.200" fill="#fff"/><circle cx="8" cy="12" r="1.400" fill="#444"/></svg>
<div class="t" style="left:978px;top:575px;font-size:12.500px;font-weight:bold;color:#333">Масса</div>
<svg style="left:845px;top:602px" width="16" height="19" viewBox="0 0 16 19"><circle cx="8" cy="3.300" r="2.300" fill="none" stroke="#444" stroke-width="1.500"/><path d="M4 6 H12 Q13.300 6 13.600 7.500 L15.500 16.500 Q15.700 18 14 18 H2 Q0.300 18 0.500 16.500 L2.400 7.500 Q2.700 6 4 6Z" fill="#444"/><circle cx="8" cy="12" r="3.200" fill="#fff"/><circle cx="8" cy="12" r="1.400" fill="#444"/></svg>
<div class="t" style="left:868px;top:607px;font-size:11.500px;color:#444;letter-spacing:0.5px">Масса воды в подающем трубопроводе</div>
<div style="left:846px;top:638.200px;width:10.500px;height:1.400px;background:#333"></div><div style="left:846px;top:642.800px;width:10.500px;height:1.400px;background:#333"></div>
<div class="t" style="left:869.500px;top:635px;font-size:14px;color:#606060;font-family:'Liberation Mono',monospace;font-style:italic;letter-spacing:0.1px">7529.70<span class="i" style="font-family:'Liberation Sans',sans-serif;font-style:normal;font-size:13.500px;color:#444;margin-left:3px">т</span></div>
<svg style="left:845px;top:667.3px" width="16" height="19" viewBox="0 0 16 19"><circle cx="8" cy="3.300" r="2.300" fill="none" stroke="#444" stroke-width="1.500"/><path d="M4 6 H12 Q13.300 6 13.600 7.500 L15.500 16.500 Q15.700 18 14 18 H2 Q0.300 18 0.500 16.500 L2.400 7.500 Q2.700 6 4 6Z" fill="#444"/><circle cx="8" cy="12" r="3.200" fill="#fff"/><circle cx="8" cy="12" r="1.400" fill="#444"/></svg>
<div class="t" style="left:868px;top:672.3px;font-size:11.500px;color:#444;letter-spacing:0.5px">Масса воды в обратном трубопроводе</div>
<svg style="left:839px;top:706px" width="20" height="20" viewBox="0 0 20 20"><circle cx="12.500" cy="7.500" r="5.500" fill="none" stroke="#444" stroke-width="1.600"/><path d="M8.500 11.500 L2 18" stroke="#444" stroke-width="2.600" stroke-linecap="round"/><path d="M10 5.500 Q11 3.800 13.500 4" stroke="#444" stroke-width="0.900" fill="none"/></svg>
<svg style="left:1027px;top:707px" width="18" height="18" viewBox="0 0 18 18"><circle cx="9" cy="9" r="7.300" fill="none" stroke="#444" stroke-width="2.600"/><circle cx="9" cy="9" r="4.300" fill="none" stroke="#444" stroke-width="0.900"/><path d="M10.800 7 Q9 5.800 7.800 7.200 Q7.200 8.600 9 9 Q10.800 9.500 10.200 11 Q9 12.200 7.200 11 M9 5 V13" stroke="#444" stroke-width="0.900" fill="none"/></svg>
<svg style="left:1055.500px;top:707.500px" width="17" height="16" viewBox="0 0 17 16"><path d="M1.200 16 V11.500 M4.600 16 V9.800 M8 16 V7.700 M11.400 16 V4.600 M14.900 16 V0.500" stroke="#444" stroke-width="2.400"/></svg>
<svg style="left:1083px;top:707px" width="18" height="18" viewBox="0 0 18 18"><circle cx="9" cy="9" r="8" fill="none" stroke="#444" stroke-width="1.500"/><circle cx="9" cy="8.500" r="5" fill="none" stroke="#444" stroke-width="0.800" stroke-dasharray="1.200 1.200"/><path d="M9 10 L11.500 5.500" stroke="#444" stroke-width="1.400"/><path d="M5 13.500 H13" stroke="#444" stroke-width="1.800"/></svg>
<svg style="left:1111.500px;top:706.900px" width="16.500" height="16.600" viewBox="0 0 16.500 16.600"><path d="M1.500 1.500 Q1.500 0 3 0 H13.500 Q15 0 15 1.500 V15.500 H16.500 V16.600 H10.800 V14.800 H7.200 V16.600 H0 V15.500 H1.500Z" fill="#444"/><rect x="4.1" y="3.6" width="2.600" height="2" fill="#fff"/><rect x="4.1" y="6.7" width="2.600" height="1.6" fill="#fff"/><rect x="4.1" y="9.3" width="2.600" height="1.8" fill="#fff"/><rect x="4.1" y="12.1" width="2.600" height="1.8" fill="#fff"/><rect x="7.4" y="3.6" width="2.600" height="2" fill="#fff"/><rect x="7.4" y="6.7" width="2.600" height="1.6" fill="#fff"/><rect x="7.4" y="9.3" width="2.600" height="1.8" fill="#fff"/><rect x="7.4" y="12.1" width="2.600" height="1.8" fill="#fff"/><rect x="10.7" y="3.6" width="2.600" height="2" fill="#fff"/><rect x="10.7" y="6.7" width="2.600" height="1.6" fill="#fff"/><rect x="10.7" y="9.3" width="2.600" height="1.8" fill="#fff"/><rect x="10.7" y="12.1" width="2.600" height="1.8" fill="#fff"/></svg>
</body></html>
